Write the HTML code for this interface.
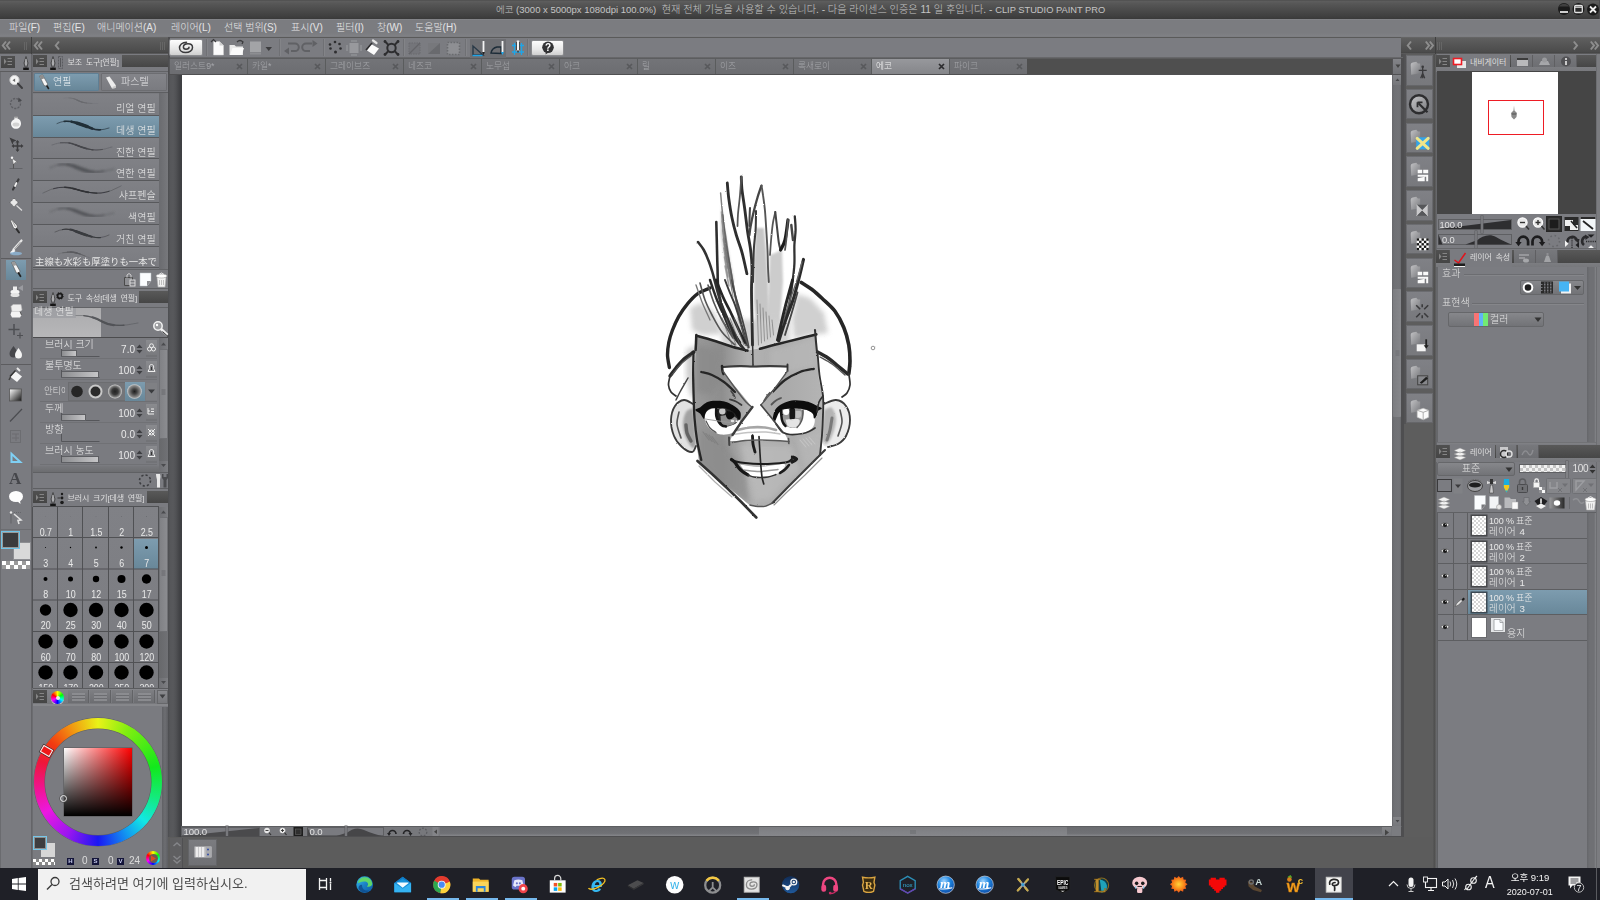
<!DOCTYPE html>
<html lang="ko">
<head>
<meta charset="utf-8">
<title>CLIP STUDIO PAINT PRO</title>
<style>
*{box-sizing:border-box;margin:0;padding:0}
html,body{width:1600px;height:900px;overflow:hidden;background:#7a7b80}
body{position:relative;font-family:"Liberation Sans","Noto Sans CJK KR",sans-serif;font-size:10px;color:#e6e6e6;line-height:1}
.a,.a *{position:absolute}
.a{left:0;top:0}
.t{white-space:nowrap;color:#e4e4e6;font-size:10px;line-height:12px;font-weight:300}
.hd{background:linear-gradient(#484848,#5b5b5b)}
.g{background:#7a7b80}
.sel{background:linear-gradient(#7498b0,#5e8199)}
.btn{background:linear-gradient(#8b8c90,#77787c);border:1px solid #6a6b6f}
svg{position:absolute;overflow:visible}
</style>
</head>
<body>
<div class="a" id="root" style="width:1600px;height:900px;filter:blur(.4px)">
<!-- title bar -->
<div style="left:0;top:0;width:1600px;height:19px;background:linear-gradient(#484848 0,#5e5e5e 1px,#565656 4px,#3e3e3e 17px,#3a3a3a 18.500px,#6a6a6c 19px)"></div>
<svg style="left:1556px;top:2px" width="44" height="15" viewBox="0 0 44 15"><circle cx="8" cy="7" r="6" fill="#1b1b1b"/><path d="M3 4.500a6 6 0 0 1 10 0z" fill="#4a4a4a" opacity=".8"/><rect x="4" y="9" width="8" height="2" fill="#cfcfcf"/><circle cx="22.500" cy="7" r="6" fill="#1b1b1b"/><rect x="18.700" y="3.500" width="7.600" height="7" rx="1" fill="#2a2a2a" stroke="#e2e2e2" stroke-width="1.300"/><path d="M19 5.200h7" stroke="#e2e2e2" stroke-width="1.200"/><circle cx="37" cy="7.500" r="6" fill="#1b1b1b"/><path d="M34 4.500l6 6M40 4.500l-6 6" stroke="#ececec" stroke-width="1.800"/></svg>
<div style="left:1599px;top:0;width:1px;height:37px;background:#4a4a4c"></div>
<div class="t" style="left:496px;top:4px;width:620px;color:#c4c4c4;font-size:10.170px"><span style="position:static;font-size:9.500px">에코 (3000 x 5000px 1080dpi 100.0%)</span>&nbsp; 현재 전체 기능을 사용할 수 있습니다. - 다음 라이센스 인증은 11 일 후입니다. - <span style="position:static;font-size:9.300px">CLIP STUDIO PAINT PRO</span></div>
<!-- menu bar -->
<div style="left:0;top:19px;width:1600px;height:18px;background:linear-gradient(#8a8b8f 0,#7b7c80 1px,#7b7c80 14px,#808185 17px,#7a7b7f 18px)"></div>
<div class="t" style="left:9px;top:22px">파일(F)</div>
<div class="t" style="left:53px;top:22px">편집(E)</div>
<div class="t" style="left:97px;top:22px">애니메이션(A)</div>
<div class="t" style="left:171px;top:22px">레이어(L)</div>
<div class="t" style="left:224px;top:22px">선택 범위(S)</div>
<div class="t" style="left:291px;top:22px">표시(V)</div>
<div class="t" style="left:336px;top:22px">필터(I)</div>
<div class="t" style="left:377px;top:22px">창(W)</div>
<div class="t" style="left:415px;top:22px">도움말(H)</div>
<!-- command bar -->
<div style="left:168px;top:37px;width:1235px;height:21px;background:#7b7c81;border-top:1px solid #5a5a5a"></div>
<!-- document tab row -->
<div style="left:168px;top:58px;width:1235px;height:16px;background:#4f4f4f"></div>
<!-- canvas -->
<div style="left:181px;top:74px;width:1211px;height:752px;background:#fff"></div>
<!-- left splitter strip -->
<div style="left:168px;top:74px;width:13.500px;height:794px;background:linear-gradient(90deg,#4c4d50 0,#56575a 2px,#58595c 5px,#515255 8px,#48494c 10px,#404144 12px,#3e3f42 13.500px)"></div>
<!-- right vertical scrollbar + strip -->
<div style="left:1392px;top:74px;width:9px;height:752px;background:#77787c"></div>
<div style="left:1401px;top:37px;width:35px;height:831px;background:#5d5d5d"></div>
<!-- bottom status + dark area -->
<div style="left:181px;top:826px;width:1220px;height:10.500px;background:#7b7c81"></div>
<div style="left:168px;top:836.500px;width:1268px;height:31.500px;background:#5c5c5c"></div>
<!-- right panel -->
<div style="left:1436px;top:37px;width:164px;height:831px;background:#7b7c81"></div>
<!-- taskbar -->
<div style="left:0;top:868px;width:1600px;height:32px;background:#1f2027"></div>
<!-- left tool column -->
<div style="left:0;top:37px;width:168px;height:17px;background:linear-gradient(#6b6b6b 0,#5f5f5f 1px,#4b4b4b 15px,#444 16px,#6d6d6f 17px)"></div>
<div style="left:31px;top:37px;width:1px;height:17px;background:#3f3f3f"></div>
<svg style="left:2px;top:41px" width="5" height="9"><path d="M4 0.5 L0.8 4.5 L4 8.5" fill="none" stroke="#8e8e8e" stroke-width="2"/></svg>
<svg style="left:6px;top:41px" width="5" height="9"><path d="M4 0.5 L0.8 4.5 L4 8.5" fill="none" stroke="#8e8e8e" stroke-width="2"/></svg>
<svg style="left:34px;top:41px" width="5" height="9"><path d="M4 0.5 L0.8 4.5 L4 8.5" fill="none" stroke="#8e8e8e" stroke-width="2"/></svg>
<svg style="left:38px;top:41px" width="5" height="9"><path d="M4 0.5 L0.8 4.5 L4 8.5" fill="none" stroke="#8e8e8e" stroke-width="2"/></svg>
<svg style="left:55px;top:41px" width="5" height="9"><path d="M4 0.5 L0.8 4.5 L4 8.5" fill="none" stroke="#8e8e8e" stroke-width="2"/></svg>
<div style="left:24px;top:42px;width:1px;height:8px;background:#666"></div><div style="left:26px;top:42px;width:1px;height:8px;background:#666"></div>
<div style="left:160px;top:42px;width:1px;height:8px;background:#666"></div><div style="left:162px;top:42px;width:1px;height:8px;background:#666"></div><div style="left:164px;top:42px;width:1px;height:8px;background:#666"></div>
<div style="left:0;top:54px;width:31px;height:18px;background:#7a7b80"></div>
<div style="left:1px;top:55.500px;width:14px;height:12.500px;background:linear-gradient(#505050,#454545)"></div>
<svg style="left:3px;top:57px" width="10" height="9"><path d="M1 1.5L3.5 4.5L1 7.5Z" fill="#858585"/><path d="M4.5 1.5H9M4.5 4.5H9M4.5 7.5H9" stroke="#858585" stroke-width="1"/></svg>
<svg style="left:22px;top:56px" width="8" height="15"><path d="M4 0.5L2 7L3 11H5L6 7Z" fill="#8d8e92" stroke="#3a3a3a" stroke-width="0.8"/><path d="M4 3V9" stroke="#d8d8d8" stroke-width="0.8"/><rect x="1.2" y="11.6" width="5.6" height="2.4" fill="#151515"/></svg>
<div style="left:31px;top:54px;width:2px;height:814px;background:linear-gradient(90deg,#606064,#6f7074)"></div>
<div style="left:0;top:71px;width:31px;height:1px;background:#5c5c5e"></div>
<div style="left:0;top:72px;width:1px;height:796px;background:#6a6b6f"></div>
<div style="left:1px;top:258px;width:30px;height:1px;background:#5c5c5f"></div>
<div style="left:1px;top:364px;width:30px;height:1px;background:#5c5c5f"></div>
<div style="left:1px;top:529px;width:30px;height:1px;background:#6c6d71"></div>
<div style="left:6px;top:260px;width:20px;height:20px;background:linear-gradient(#7d9caf,#688799)"></div>
<svg style="left:8px;top:74px" width="16" height="17" viewBox="0 0 16 17"><circle cx="6.5" cy="6" r="4.6" fill="#f4f4f4" stroke="#d0d0d0"/><path d="M4.5 6.3l2.6-1.7v3.4z" fill="#666"/><path d="M10 9.6l4 4.4" stroke="#3c3c3e" stroke-width="2" stroke-linecap="round"/></svg>
<svg style="left:8px;top:95px" width="16" height="17" viewBox="0 0 16 17"><circle cx="7.5" cy="8.5" r="5" fill="none" stroke="#5d5e62" stroke-width="1.3" stroke-dasharray="2.2 1.2"/><path d="M10.5 2.5l3.5 3-4 1.5z" fill="#48494c"/></svg>
<svg style="left:8px;top:116px" width="16" height="17" viewBox="0 0 16 17"><path d="M8 2.2c3 0 5 2.3 5 5.3s-2 5.3-5 5.3-5-2.3-5-5.3c0-2 1.6-3.3 3.4-4.3V1.2h3.2v2" fill="#f4f4f4"/><ellipse cx="8" cy="8.6" rx="3.4" ry="2" fill="#d2d2d2"/><rect x="6.3" y="0.6" width="3.4" height="1.6" fill="#a6a6a6"/></svg>
<svg style="left:8px;top:136px" width="16" height="17" viewBox="0 0 16 17"><path d="M1.5 1.5l7 3-3 1.2-1 3z" fill="#3c3c3e"/><path d="M9.5 5.5v9M5 10h9" stroke="#3c3c3e" stroke-width="1.6"/><path d="M9.5 4l-2 2.5h4zM9.5 16l-2-2.500h4zM3.500 10l2.500-2v4zM15.500 10l-2.500-2v4z" fill="#3c3c3e"/></svg>
<svg style="left:8px;top:156px" width="16" height="17" viewBox="0 0 16 17"><path d="M4.200 2.200l1.200 6.500 1.500-2 2.400-.5z" fill="#f4f4f4" stroke="#666" stroke-width=".6"/><circle cx="4" cy="1.8" r="1.200" fill="#f4f4f4"/><path d="M1.500 12.500h13" stroke="#636468" stroke-width="1"/><path d="M5.500 8v4.500" stroke="#555" stroke-width="1"/></svg>
<svg style="left:8px;top:177px" width="16" height="17" viewBox="0 0 16 17"><path d="M10.500 2.500l-5.500 10" stroke="#3c3c3e" stroke-width="2.200" stroke-linecap="round"/><path d="M8.500 6l-1.500 3" stroke="#f4f4f4" stroke-width="1.800" stroke-linecap="round"/></svg>
<svg style="left:8px;top:197px" width="16" height="17" viewBox="0 0 16 17"><path d="M6 1l4 4.500-4 4.500-4-4.500z" fill="#e9e9e9" stroke="#5c5c5c" stroke-width=".8" stroke-dasharray="1.500 1"/><path d="M8.500 8.500l5.500 5" stroke="#dcdcdc" stroke-width="1.200"/></svg>
<svg style="left:8px;top:218px" width="16" height="17" viewBox="0 0 16 17"><path d="M4 1.500l5.500 6.500-1 3.500-3-1.500-3-7z" fill="#f4f4f4" stroke="#555" stroke-width=".7"/><path d="M8.500 11l2.500 3.500" stroke="#2d2d2d" stroke-width="2" stroke-linecap="round"/><path d="M4 2l3.500 7" stroke="#777" stroke-width=".7"/></svg>
<svg style="left:8px;top:239px" width="16" height="17" viewBox="0 0 16 17"><path d="M13.500 1.500l-8 9" stroke="#e6e6e6" stroke-width="2.200" stroke-linecap="round"/><path d="M5.500 10l-3.500 3.500 2.500 1 3-2.500z" fill="#f4f4f4"/><ellipse cx="8" cy="14.500" rx="6" ry="1.800" fill="#8fb8d8" opacity=".8"/><path d="M12.500 3l-6 7" stroke="#8a8a8a" stroke-width=".8"/></svg>
<svg style="left:8px;top:261px" width="16" height="17" viewBox="0 0 16 17"><path d="M3.500 1.500l3-1 5.500 9.500-.8 2.500-2.800-.5z" fill="#f4f4f4" stroke="#565656" stroke-width=".7"/><path d="M3.500 1.500l3-1 2 3.500-3.200 1z" fill="#9a9a9a"/><path d="M10.500 12l2 3.200" stroke="#222" stroke-width="1.800" stroke-linecap="round"/></svg>
<svg style="left:8px;top:282px" width="16" height="17" viewBox="0 0 16 17"><ellipse cx="7" cy="10" rx="4.500" ry="2.300" fill="#f4f4f4"/><ellipse cx="7" cy="13" rx="4.500" ry="2" fill="#e3e3e3"/><rect x="5" y="4.500" width="4" height="4" fill="#ededed"/><path d="M10 6l5-3v6z" fill="#a3a4a8" opacity=".8"/></svg>
<svg style="left:8px;top:303px" width="16" height="17" viewBox="0 0 16 17"><path d="M5 1.500h8l1 5.500-2 1.500h-8l-1-5z" fill="#ededed" stroke="#bdbdbd" stroke-width=".6"/><path d="M3.500 8.500h8.500l1.500 3.500-1.500 2.500h-8l-1.500-3z" fill="#f4f4f4"/><path d="M12 8.500l1.500 3.500" stroke="#555" stroke-width="1"/></svg>
<svg style="left:8px;top:323px" width="16" height="17" viewBox="0 0 16 17"><path d="M6 1v11M.5 6.500h11" stroke="#4e4f53" stroke-width="1.500"/><path d="M12 9.500v6M9 12.500h6" stroke="#4e4f53" stroke-width="1.200"/></svg>
<svg style="left:8px;top:344px" width="16" height="17" viewBox="0 0 16 17"><path d="M5.500 2c2 3 4 5 4 7.500a4 4 0 0 1-8 0c0-2.500 2-4.500 4-7.500z" fill="#46474b"/><path d="M10.500 4c2 3 3.500 4.500 3.500 7a3.500 3.500 0 0 1-7 0c0-2.500 1.500-4 3.500-7z" fill="#f4f4f4"/></svg>
<svg style="left:8px;top:367px" width="16" height="17" viewBox="0 0 16 17"><path d="M7 4l7 5.500-5 5.500-6.500-5z" fill="#f4f4f4"/><path d="M2 9.500l5.500-6" stroke="#333" stroke-width="1.600"/><path d="M9 1l3 3" stroke="#e8e8e8" stroke-width="2"/><path d="M2.500 10l-1.500 3" stroke="#444" stroke-width="1.500"/></svg>
<svg style="left:8px;top:387px" width="16" height="17" viewBox="0 0 16 17"><defs><linearGradient id="tg" x1="0" y1="0" x2="1" y2="1"><stop offset="0" stop-color="#fff"/><stop offset="1" stop-color="#111"/></linearGradient></defs><rect x="1.500" y="2" width="12" height="12" fill="url(#tg)" stroke="#555" stroke-width=".8"/></svg>
<svg style="left:8px;top:407px" width="16" height="17" viewBox="0 0 16 17"><path d="M2 14.500L14 2" stroke="#4b4c50" stroke-width="1.200"/></svg>
<svg style="left:8px;top:428px" width="16" height="17" viewBox="0 0 16 17"><rect x="2.500" y="2.500" width="10" height="12" fill="none" stroke="#6c6d71" stroke-width="1"/><path d="M4 6h7M4 10h7M8 6v7" stroke="#6c6d71" stroke-width="1"/></svg>
<svg style="left:8px;top:449px" width="16" height="17" viewBox="0 0 16 17"><path d="M3.500 4.800v8.200h8.800z" fill="none" stroke="#7fd0f4" stroke-width="2" stroke-linejoin="miter"/></svg>
<svg style="left:8px;top:470px" width="16" height="17" viewBox="0 0 16 17"><text x="1" y="14" font-family="Liberation Serif,serif" font-weight="bold" font-size="17" fill="#45464a">A</text></svg>
<svg style="left:8px;top:489px" width="16" height="17" viewBox="0 0 16 17"><ellipse cx="8" cy="7.500" rx="7" ry="5.500" fill="#fdfdfd"/><path d="M9 12l3.500 3-.5-4z" fill="#fdfdfd"/></svg>
<svg style="left:8px;top:510px" width="16" height="17" viewBox="0 0 16 17"><path d="M3 2.500v11" stroke="#6b6c70" stroke-width="1.600"/><circle cx="3" cy="2.500" r="1.200" fill="#e6e6e6"/><path d="M6 4l7 6-3 .5 1 3.500" fill="none" stroke="#e2e2e2" stroke-width="1.600"/><path d="M6 2.500h7" stroke="#66676b" stroke-width="1" stroke-dasharray="1 1"/></svg>
<div style="left:13px;top:542px;width:18px;height:18px;background:#d9d9d9;border:1px solid #8d8e92"></div>
<div style="left:1px;top:531px;width:19px;height:18px;background:#3b3b3d;border:1px solid #6fc3e6;box-shadow:inset 0 0 0 1px #9a9a9a"></div>
<div style="left:2px;top:561px;width:28px;height:8px;background:#fff;background-image:linear-gradient(45deg,#9a9a9a 25%,transparent 25%,transparent 75%,#9a9a9a 75%),linear-gradient(45deg,#9a9a9a 25%,transparent 25%,transparent 75%,#9a9a9a 75%);background-size:8px 8px;background-position:0 0,4px 4px"></div>
<!-- left sub tool / property / size / colour panels -->
<div style="left:33px;top:54.7px;width:135px;height:12.500px;background:linear-gradient(#595959,#464646)"></div>
<div style="left:33px;top:54.7px;width:14px;height:12.500px;background:linear-gradient(#505050,#454545)"></div>
<svg style="left:35px;top:56.7px" width="10" height="9"><path d="M1 1.500L3.500 4.500L1 7.500Z" fill="#858585"/><path d="M4.500 1.500H9M4.500 4.500H9M4.500 7.500H9" stroke="#858585" stroke-width="1"/></svg>
<div style="left:47px;top:54.7px;width:75px;height:17px;background:#7a7b80"></div>
<svg style="left:49px;top:55.7px" width="8" height="15"><path d="M4 0.500L2 7L3 11H5L6 7Z" fill="#8d8e92" stroke="#3a3a3a" stroke-width="0.800"/><path d="M4 3V9" stroke="#d8d8d8" stroke-width="0.800"/><rect x="1.200" y="11.600" width="5.600" height="2.400" fill="#151515"/></svg>
<svg style="left:57px;top:56px" width="7" height="13"><path d="M1.500 .500h4v12h-4z" fill="none" stroke="#5b5c60" stroke-dasharray="2 1"/><path d="M3.500 2v9" stroke="#55565a"/></svg>
<div class="t" style="left:67.500px;top:56.7px;font-size:8px;font-weight:400;letter-spacing:-.1px;word-spacing:1.500px;color:#dedede">보조 도구[연필]</div>
<div style="left:33px;top:70.7px;width:135px;height:1px;background:#626366"></div>
<div style="left:34px;top:73px;width:65px;height:18px;background:linear-gradient(#7d9caf,#688799);border:1px solid #5f7f94;border-radius:1px"></div>
<div style="left:101px;top:73px;width:66px;height:18px;background:linear-gradient(#84858a,#7a7b80);border:1px solid #6c6d71;border-radius:1px"></div>
<svg style="left:38px;top:74px" width="12" height="16" viewBox="0 0 12 16"><path d="M1.500 2l3-1.300 5 9-.6 2.600-2.800-.8z" fill="#f6f6f6" stroke="#555" stroke-width=".6"/><path d="M1.500 2l3-1.300 2 3.600-3.200 1.200z" fill="#8d8d8d"/><path d="M9 12l1.500 2.500" stroke="#222" stroke-width="1.600" stroke-linecap="round"/></svg>
<div class="t" style="left:53px;top:76px;color:#eef2f5">연필</div>
<svg style="left:105px;top:76px" width="12" height="14" viewBox="0 0 12 14"><path d="M1 1.500l3.500-1 6.500 9-.5 2.500-3.500.5z" fill="#ececec"/><path d="M7.500 11l3.500-1.500-.5 2.500-3 .5z" fill="#c9c9c9"/></svg>
<div class="t" style="left:121px;top:76px">파스텔</div>
<div style="left:33px;top:92px;width:135px;height:1px;background:#5d5e61"></div>
<svg width="0" height="0"><defs><filter id="b1"><feGaussianBlur stdDeviation="0.700"/></filter><filter id="b2"><feGaussianBlur stdDeviation="1.300"/></filter></defs></svg>
<div style="left:33px;top:94.0px;width:126px;height:20.8px;background:linear-gradient(#808186,#7a7b80)"></div>
<div style="left:33px;top:114.8px;width:126px;height:1px;background:#58595c"></div>
<svg style="left:0;top:0" width="168" height="300"><g fill="none" stroke="#5f6064" stroke-linecap="round" filter="url(#b1)" opacity="0.7"><path d="M64 98 q8 -1 14 2.500 t20 3" stroke-width="0.28" opacity=".7"/><path d="M64 98 q8 -1 14 2.500 t20 3" pathLength="100" stroke-dasharray="70 200" stroke-dashoffset="-14" stroke-width="0.48"/><path d="M64 98 q8 -1 14 2.500 t20 3" pathLength="100" stroke-dasharray="40 200" stroke-dashoffset="-28" stroke-width="0.80"/><path d="M64 98 q8 -1 14 2.500 t20 3" pathLength="100" stroke-dasharray="20 200" stroke-dashoffset="-38" stroke-width="1.04"/></g></svg>
<div class="t" style="left:33px;top:103.0px;width:122.600px;text-align:right;color:#ececec">리얼 연필</div>
<div style="left:33px;top:115.8px;width:126px;height:20.8px;background:linear-gradient(#7d9caf,#688799)"></div>
<div style="left:33px;top:136.6px;width:126px;height:1px;background:#58595c"></div>
<svg style="left:0;top:0" width="168" height="300"><g fill="none" stroke="#1f2a33" stroke-linecap="round" filter="url(#b1)" opacity="0.95"><path d="M57 123.500 q8 -4 18 -1 t17 6 t17 -.5" stroke-width="0.91" opacity=".7"/><path d="M57 123.500 q8 -4 18 -1 t17 6 t17 -.5" pathLength="100" stroke-dasharray="70 200" stroke-dashoffset="-14" stroke-width="1.56"/><path d="M57 123.500 q8 -4 18 -1 t17 6 t17 -.5" pathLength="100" stroke-dasharray="40 200" stroke-dashoffset="-28" stroke-width="2.60"/><path d="M57 123.500 q8 -4 18 -1 t17 6 t17 -.5" pathLength="100" stroke-dasharray="20 200" stroke-dashoffset="-38" stroke-width="3.38"/></g></svg>
<div class="t" style="left:33px;top:124.8px;width:122.600px;text-align:right;color:#ececec">데생 연필</div>
<div style="left:33px;top:137.6px;width:126px;height:20.8px;background:linear-gradient(#808186,#7a7b80)"></div>
<div style="left:33px;top:158.4px;width:126px;height:1px;background:#58595c"></div>
<svg style="left:0;top:0" width="168" height="300"><g fill="none" stroke="#404145" stroke-linecap="round" filter="url(#b1)" opacity="0.9"><path d="M52 145 q12 -5 24 0 t20 5 t16 -3" stroke-width="0.45" opacity=".7"/><path d="M52 145 q12 -5 24 0 t20 5 t16 -3" pathLength="100" stroke-dasharray="70 200" stroke-dashoffset="-14" stroke-width="0.78"/><path d="M52 145 q12 -5 24 0 t20 5 t16 -3" pathLength="100" stroke-dasharray="40 200" stroke-dashoffset="-28" stroke-width="1.30"/><path d="M52 145 q12 -5 24 0 t20 5 t16 -3" pathLength="100" stroke-dasharray="20 200" stroke-dashoffset="-38" stroke-width="1.69"/></g></svg>
<div class="t" style="left:33px;top:146.6px;width:122.600px;text-align:right;color:#ececec">진한 연필</div>
<div style="left:33px;top:159.4px;width:126px;height:20.8px;background:linear-gradient(#808186,#7a7b80)"></div>
<div style="left:33px;top:180.20000000000002px;width:126px;height:1px;background:#58595c"></div>
<svg style="left:0;top:0" width="168" height="300"><g fill="none" stroke="#4a4b4f" stroke-linecap="round" filter="url(#b2)" opacity="0.8"><path d="M50 168 q12 -7 26 -1 t22 5 t16 -3" stroke-width="1.05" opacity=".7"/><path d="M50 168 q12 -7 26 -1 t22 5 t16 -3" pathLength="100" stroke-dasharray="70 200" stroke-dashoffset="-14" stroke-width="1.80"/><path d="M50 168 q12 -7 26 -1 t22 5 t16 -3" pathLength="100" stroke-dasharray="40 200" stroke-dashoffset="-28" stroke-width="3.00"/><path d="M50 168 q12 -7 26 -1 t22 5 t16 -3" pathLength="100" stroke-dasharray="20 200" stroke-dashoffset="-38" stroke-width="3.90"/></g></svg>
<div class="t" style="left:33px;top:168.4px;width:122.600px;text-align:right;color:#ececec">연한 연필</div>
<div style="left:33px;top:181.2px;width:126px;height:20.8px;background:linear-gradient(#808186,#7a7b80)"></div>
<div style="left:33px;top:202.0px;width:126px;height:1px;background:#58595c"></div>
<svg style="left:0;top:0" width="168" height="300"><g fill="none" stroke="#2e2f33" stroke-linecap="round" filter="url(#b1)" opacity="0.95"><path d="M43 193 q16 -9 32 -4 t26 4 t20 -7" stroke-width="0.45" opacity=".7"/><path d="M43 193 q16 -9 32 -4 t26 4 t20 -7" pathLength="100" stroke-dasharray="70 200" stroke-dashoffset="-14" stroke-width="0.78"/><path d="M43 193 q16 -9 32 -4 t26 4 t20 -7" pathLength="100" stroke-dasharray="40 200" stroke-dashoffset="-28" stroke-width="1.30"/><path d="M43 193 q16 -9 32 -4 t26 4 t20 -7" pathLength="100" stroke-dasharray="20 200" stroke-dashoffset="-38" stroke-width="1.69"/></g></svg>
<div class="t" style="left:33px;top:190.2px;width:122.600px;text-align:right;color:#ececec">샤프펜슬</div>
<div style="left:33px;top:203.0px;width:126px;height:20.8px;background:linear-gradient(#808186,#7a7b80)"></div>
<div style="left:33px;top:223.8px;width:126px;height:1px;background:#58595c"></div>
<svg style="left:0;top:0" width="168" height="300"><g fill="none" stroke="#4a4b4f" stroke-linecap="round" filter="url(#b2)" opacity="0.8"><path d="M50 212 q12 -7 26 -1 t22 5 t16 -3" stroke-width="0.91" opacity=".7"/><path d="M50 212 q12 -7 26 -1 t22 5 t16 -3" pathLength="100" stroke-dasharray="70 200" stroke-dashoffset="-14" stroke-width="1.56"/><path d="M50 212 q12 -7 26 -1 t22 5 t16 -3" pathLength="100" stroke-dasharray="40 200" stroke-dashoffset="-28" stroke-width="2.60"/><path d="M50 212 q12 -7 26 -1 t22 5 t16 -3" pathLength="100" stroke-dasharray="20 200" stroke-dashoffset="-38" stroke-width="3.38"/></g></svg>
<div class="t" style="left:33px;top:212.0px;width:122.600px;text-align:right;color:#ececec">색연필</div>
<div style="left:33px;top:224.8px;width:126px;height:20.8px;background:linear-gradient(#808186,#7a7b80)"></div>
<div style="left:33px;top:245.60000000000002px;width:126px;height:1px;background:#58595c"></div>
<svg style="left:0;top:0" width="168" height="300"><g fill="none" stroke="#333438" stroke-linecap="round" filter="url(#b1)" opacity="0.9"><path d="M55 232 q10 -5 20 -1 t18 6 t16 -2" stroke-width="0.70" opacity=".7"/><path d="M55 232 q10 -5 20 -1 t18 6 t16 -2" pathLength="100" stroke-dasharray="70 200" stroke-dashoffset="-14" stroke-width="1.20"/><path d="M55 232 q10 -5 20 -1 t18 6 t16 -2" pathLength="100" stroke-dasharray="40 200" stroke-dashoffset="-28" stroke-width="2.00"/><path d="M55 232 q10 -5 20 -1 t18 6 t16 -2" pathLength="100" stroke-dasharray="20 200" stroke-dashoffset="-38" stroke-width="2.60"/></g></svg>
<div class="t" style="left:33px;top:233.8px;width:122.600px;text-align:right;color:#ececec">거친 연필</div>
<div style="left:33px;top:246.6px;width:126px;height:20.8px;background:linear-gradient(#808186,#7a7b80)"></div>
<div style="left:33px;top:267.4px;width:126px;height:1px;background:#58595c"></div>
<svg style="left:0;top:0" width="168" height="300"><g fill="none" stroke="#525357" stroke-linecap="round" filter="url(#b1)" opacity="0.8"><path d="M58 254 q12 -4 22 0 t10 4" stroke-width="0.42" opacity=".7"/><path d="M58 254 q12 -4 22 0 t10 4" pathLength="100" stroke-dasharray="70 200" stroke-dashoffset="-14" stroke-width="0.72"/><path d="M58 254 q12 -4 22 0 t10 4" pathLength="100" stroke-dasharray="40 200" stroke-dashoffset="-28" stroke-width="1.20"/><path d="M58 254 q12 -4 22 0 t10 4" pathLength="100" stroke-dasharray="20 200" stroke-dashoffset="-38" stroke-width="1.56"/></g></svg>
<div class="t" style="left:35px;top:256px;font-family:'Liberation Sans','Noto Sans CJK JP',sans-serif;font-size:9.400px;font-weight:400;letter-spacing:0;color:#e6e6e6;width:123px;overflow:hidden">主線も水彩も厚塗りも一本で</div>
<div style="left:159px;top:93px;width:9px;height:176px;background:linear-gradient(90deg,#6a6b6f,#77787c)"></div>
<div style="left:33px;top:269px;width:135px;height:1px;background:#636467"></div>
<svg style="left:122px;top:271px" width="46" height="18" viewBox="0 0 46 18"><path d="M2.500 6.500h8v8h-8z" fill="#8e8f93" stroke="#4a4a4a"/><path d="M5 6.500v-2.500l2-1.500 2 1.500v2.500" fill="none" stroke="#d0d0d0"/><rect x="8" y="9" width="5" height="6" fill="#7a7b80" stroke="#e4e4e4" stroke-width=".9"/><path d="M8 12h5" stroke="#e4e4e4" stroke-width=".8"/><path d="M18 2h11v8l-4 5h-7z" fill="#fbfdff" stroke="#bfc4c8" stroke-width=".5"/><path d="M29 10l-4 5v-5z" fill="#8d8e92"/><path d="M35 6.500h9l-1 9.500h-7z" fill="#f0f0f0" stroke="#b0b0b0" stroke-width=".6"/><ellipse cx="39.500" cy="5" rx="5.500" ry="2" fill="#fff" stroke="#9c9c9c" stroke-width=".6"/><path d="M37 3.500q2.500-3 5 0" fill="none" stroke="#e8e8e8"/><path d="M37.500 9v5M39.500 9v5M41.500 9v5" stroke="#a8a8a8" stroke-width=".7"/></svg>
<div style="left:33px;top:288px;width:135px;height:1px;background:#5e5f62"></div>
<div style="left:33px;top:290.7px;width:135px;height:12.500px;background:linear-gradient(#595959,#464646)"></div>
<div style="left:33px;top:290.7px;width:14px;height:12.500px;background:linear-gradient(#505050,#454545)"></div>
<svg style="left:35px;top:292.7px" width="10" height="9"><path d="M1 1.500L3.500 4.500L1 7.500Z" fill="#858585"/><path d="M4.500 1.500H9M4.500 4.500H9M4.500 7.500H9" stroke="#858585" stroke-width="1"/></svg>
<div style="left:47px;top:290.7px;width:92px;height:17px;background:#7a7b80"></div>
<svg style="left:49px;top:291.7px" width="8" height="15"><path d="M4 0.500L2 7L3 11H5L6 7Z" fill="#8d8e92" stroke="#3a3a3a" stroke-width="0.800"/><path d="M4 3V9" stroke="#d8d8d8" stroke-width="0.800"/><rect x="1.200" y="11.600" width="5.600" height="2.400" fill="#151515"/></svg>
<svg style="left:56.300px;top:291.700px" width="7.800" height="7.800" viewBox="0 0 10 10"><circle cx="5" cy="5" r="3" fill="none" stroke="#1c1c1c" stroke-width="2.200"/><circle cx="5" cy="5" r="4" fill="none" stroke="#1c1c1c" stroke-width="1.600" stroke-dasharray="1.500 1.640"/></svg>
<div class="t" style="left:67.500px;top:292.7px;font-size:8px;font-weight:400;letter-spacing:-.1px;word-spacing:1.500px;color:#dedede">도구 속성[데생 연필]</div>
<div style="left:33px;top:306.7px;width:135px;height:1px;background:#626366"></div>
<div style="left:33px;top:307.500px;width:135px;height:29.500px;background:#7b7c81"></div>
<div style="left:33px;top:307.500px;width:68px;height:29.500px;background:linear-gradient(#ababad,#b7b7b9)"></div>
<div style="left:33px;top:307.500px;width:43px;height:10.500px;background:rgba(150,152,156,.55)"></div>
<svg style="left:0;top:0" width="168" height="340"><g fill="none" stroke="#4e4f53" stroke-linecap="round" filter="url(#b1)" opacity=".9"><path d="M76 315.500 q14 -1 26 6 t36 1.500" stroke-width=".7" opacity=".7"/><path d="M76 315.500 q14 -1 26 6 t36 1.500" pathLength="100" stroke-dasharray="66 200" stroke-dashoffset="-12" stroke-width="1.300"/><path d="M76 315.500 q14 -1 26 6 t36 1.500" pathLength="100" stroke-dasharray="36 200" stroke-dashoffset="-26" stroke-width="2.200"/></g></svg>
<div class="t" style="left:34px;top:306px;color:#e9e9e9;font-size:10px">데생 연필</div>
<svg style="left:152px;top:320px" width="17" height="17" viewBox="0 0 17 17"><circle cx="6" cy="6" r="4.200" fill="#9b9c9f" stroke="#f2f2f2" stroke-width="1.500"/><path d="M9 9l6.500 6" stroke="#f0f0f0" stroke-width="2.600"/><path d="M10.500 11.500l5.500 5" stroke="#333" stroke-width="1"/><circle cx="5" cy="5" r="1.200" fill="#fff"/></svg>
<div style="left:33px;top:337px;width:135px;height:1px;background:#4c4c4e"></div>
<div style="left:40px;top:358px;width:117px;height:1px;background:#707175"></div>
<div class="t" style="left:45px;top:339px;color:#e9e9e9">브러시 크기</div>
<div class="t" style="left:100px;top:344px;width:35px;text-align:right;color:#e9e9e9;font-size:10px">7.0</div>
<svg style="left:136px;top:344px" width="7" height="10"><path d="M3.500 .500l3 3.500h-6zM3.500 9.500l3-3.500h-6z" fill="#3e3f42"/></svg>
<div style="left:146px;top:340px;width:11px;height:17px;background:linear-gradient(#8a8b8f,#797a7e);border-bottom:2px solid #727377"></div>
<svg style="left:147px;top:343px" width="9" height="9" viewBox="0 0 9 9"><circle cx="4.500" cy="2.800" r="2" fill="none" stroke="#eee"/><circle cx="2.500" cy="6" r="2" fill="none" stroke="#eee"/><circle cx="6.500" cy="6" r="2" fill="none" stroke="#eee"/></svg>
<svg style="left:61px;top:349px" width="40" height="9"><path d="M.500 0V7.500H38.500" fill="none" stroke="#55565a"/></svg>
<div style="left:62px;top:349.5px;width:15px;height:7.500px;background:linear-gradient(90deg,#8c8d90,#c6c6c8);border:1px solid #5e5f63;border-left:none"></div>
<div style="left:40px;top:379px;width:117px;height:1px;background:#707175"></div>
<div class="t" style="left:45px;top:360px;color:#e9e9e9">불투명도</div>
<div class="t" style="left:100px;top:365px;width:35px;text-align:right;color:#e9e9e9;font-size:10px">100</div>
<svg style="left:136px;top:365px" width="7" height="10"><path d="M3.500 .500l3 3.500h-6zM3.500 9.500l3-3.500h-6z" fill="#3e3f42"/></svg>
<div style="left:146px;top:361px;width:11px;height:17px;background:linear-gradient(#8a8b8f,#797a7e);border-bottom:2px solid #727377"></div>
<svg style="left:147px;top:364px" width="9" height="9" viewBox="0 0 9 9"><path d="M4.500 .500c2 0 2.500 2 2 4l1.500 3h-7l1.500-3c-.5-2 0-4 2-4z" fill="none" stroke="#eee"/><path d="M4.500 3v3" stroke="#333"/></svg>
<svg style="left:61px;top:370px" width="40" height="9"><path d="M.500 0V7.500H38.500" fill="none" stroke="#55565a"/></svg>
<div style="left:62px;top:370.5px;width:37px;height:7.500px;background:linear-gradient(90deg,#8c8d90,#c6c6c8);border:1px solid #5e5f63;border-left:none"></div>
<div style="left:40px;top:422px;width:117px;height:1px;background:#707175"></div>
<div class="t" style="left:45px;top:403px;color:#e9e9e9">두께</div>
<div class="t" style="left:100px;top:408px;width:35px;text-align:right;color:#e9e9e9;font-size:10px">100</div>
<svg style="left:136px;top:408px" width="7" height="10"><path d="M3.500 .500l3 3.500h-6zM3.500 9.500l3-3.500h-6z" fill="#3e3f42"/></svg>
<div style="left:146px;top:404px;width:11px;height:17px;background:linear-gradient(#8a8b8f,#797a7e);border-bottom:2px solid #727377"></div>
<svg style="left:147px;top:407px" width="9" height="9" viewBox="0 0 9 9"><path d="M1 1v6h6M4 2l3 0M4 4.500l3 0" fill="none" stroke="#eee"/><path d="M1 4h2" stroke="#eee"/></svg>
<svg style="left:61px;top:413px" width="40" height="9"><path d="M.500 0V7.500H38.500" fill="none" stroke="#55565a"/></svg>
<div style="left:62px;top:413.5px;width:24px;height:7.500px;background:linear-gradient(90deg,#8c8d90,#c6c6c8);border:1px solid #5e5f63;border-left:none"></div>
<div style="left:40px;top:443px;width:117px;height:1px;background:#707175"></div>
<div class="t" style="left:45px;top:424px;color:#e9e9e9">방향</div>
<div class="t" style="left:100px;top:429px;width:35px;text-align:right;color:#e9e9e9;font-size:10px">0.0</div>
<svg style="left:136px;top:429px" width="7" height="10"><path d="M3.500 .500l3 3.500h-6zM3.500 9.500l3-3.500h-6z" fill="#3e3f42"/></svg>
<div style="left:146px;top:425px;width:11px;height:17px;background:linear-gradient(#8a8b8f,#797a7e);border-bottom:2px solid #727377"></div>
<svg style="left:147px;top:428px" width="9" height="9" viewBox="0 0 9 9"><path d="M1 1l7 7M8 1l-7 7" stroke="#eee"/><circle cx="4.500" cy="4.500" r="2.500" fill="none" stroke="#eee"/></svg>
<svg style="left:61px;top:434px" width="40" height="9"><path d="M.500 0V7.500H38.500" fill="none" stroke="#55565a"/></svg>
<div style="left:40px;top:464px;width:117px;height:1px;background:#707175"></div>
<div class="t" style="left:45px;top:445px;color:#e9e9e9">브러시 농도</div>
<div class="t" style="left:100px;top:450px;width:35px;text-align:right;color:#e9e9e9;font-size:10px">100</div>
<svg style="left:136px;top:450px" width="7" height="10"><path d="M3.500 .500l3 3.500h-6zM3.500 9.500l3-3.500h-6z" fill="#3e3f42"/></svg>
<div style="left:146px;top:446px;width:11px;height:17px;background:linear-gradient(#8a8b8f,#797a7e);border-bottom:2px solid #727377"></div>
<svg style="left:147px;top:449px" width="9" height="9" viewBox="0 0 9 9"><path d="M4.500 .500c2 0 2.500 2 2 4l1.500 3h-7l1.500-3c-.5-2 0-4 2-4z" fill="none" stroke="#eee"/><path d="M4.500 3v3" stroke="#333"/></svg>
<svg style="left:61px;top:455px" width="40" height="9"><path d="M.500 0V7.500H38.500" fill="none" stroke="#55565a"/></svg>
<div style="left:62px;top:455.5px;width:37px;height:7.500px;background:linear-gradient(90deg,#8c8d90,#c6c6c8);border:1px solid #5e5f63;border-left:none"></div>
<div class="t" style="left:44px;top:385px;color:#dedede;font-size:9.500px;letter-spacing:-.3px;width:21px;overflow:hidden">안티에</div>
<div style="left:68px;top:382px;width:77px;height:19px;background:#747579;border:1px solid #6c6d70"></div>
<div style="left:125px;top:382px;width:20px;height:19px;background:linear-gradient(#7d9caf,#688799)"></div>
<svg style="left:68px;top:382px" width="90" height="19" viewBox="0 0 90 19"><circle cx="9" cy="9.500" r="5.800" fill="#262626"/><circle cx="27.500" cy="9.500" r="6" fill="#2b2b2b" stroke="#c8c8c8" stroke-width="2"/><defs><radialGradient id="aa3"><stop offset="0" stop-color="#222"/><stop offset=".45" stop-color="#3a3a3a"/><stop offset=".75" stop-color="#777"/><stop offset="1" stop-color="#cfcfcf"/></radialGradient><radialGradient id="aa4"><stop offset="0" stop-color="#1e1e1e"/><stop offset=".35" stop-color="#444"/><stop offset=".8" stop-color="#8b8b8b"/><stop offset="1" stop-color="#d4d4d4"/></radialGradient></defs><circle cx="47" cy="9.500" r="7" fill="url(#aa3)"/><circle cx="66.500" cy="9.500" r="7.300" fill="url(#aa4)"/><rect x="78" y="1" width="11" height="17" fill="#7f8084"/><path d="M80 7.500h7l-3.500 4z" fill="#3a3b3e"/></svg>
<div style="left:40px;top:401px;width:117px;height:1px;background:#6e6f73"></div>
<div style="left:33px;top:466px;width:126px;height:6px;background:linear-gradient(#77787c,#6c6d70)"></div>
<div style="left:159px;top:338px;width:9px;height:134px;background:linear-gradient(90deg,#6e6f73,#7d7e82)"></div>
<div style="left:159px;top:349px;width:9px;height:90px;background:linear-gradient(90deg,#808185,#8b8c90);border:1px solid #6f7074"></div>
<div style="left:159px;top:439px;width:9px;height:22px;background:linear-gradient(90deg,#67686b,#707175)"></div>
<svg style="left:159px;top:338px" width="9" height="134"><path d="M2 7.500h5l-2.500-3zM2 126h5l-2.500 3z" fill="#4a4b4e"/><path d="M2.500 52h4M2.500 54h4M2.500 56h4" stroke="#5f6064" stroke-width=".8"/></svg>
<div style="left:33px;top:472px;width:135px;height:1px;background:#5f6063"></div>
<svg style="left:136px;top:472px" width="33" height="17" viewBox="0 0 33 17"><circle cx="9" cy="8.500" r="5.500" fill="none" stroke="#3d3e41" stroke-width="1.600" stroke-dasharray="2.200 2.100"/><path d="M20 2c0 3 1 5 1 6v7.500h3v-7.500c0-2 1-3 0-6z" fill="#e9e9e9"/><path d="M26 2v4l1.500 2v7.500h3v-7.500l1.500-2v-4h-1.500v3h-3v-3z" fill="#4b4c4f"/></svg>
<div style="left:33px;top:488px;width:135px;height:1px;background:#5e5f62"></div>
<div style="left:33px;top:490.7px;width:135px;height:12.500px;background:linear-gradient(#595959,#464646)"></div>
<div style="left:33px;top:490.7px;width:14px;height:12.500px;background:linear-gradient(#505050,#454545)"></div>
<svg style="left:35px;top:492.7px" width="10" height="9"><path d="M1 1.500L3.500 4.500L1 7.500Z" fill="#858585"/><path d="M4.500 1.500H9M4.500 4.500H9M4.500 7.500H9" stroke="#858585" stroke-width="1"/></svg>
<div style="left:47px;top:490.7px;width:100px;height:17px;background:#7a7b80"></div>
<svg style="left:49px;top:491.7px" width="8" height="15"><path d="M4 0.500L2 7L3 11H5L6 7Z" fill="#8d8e92" stroke="#3a3a3a" stroke-width="0.800"/><path d="M4 3V9" stroke="#d8d8d8" stroke-width="0.800"/><rect x="1.200" y="11.600" width="5.600" height="2.400" fill="#151515"/></svg>
<svg style="left:57px;top:492px" width="8" height="13"><path d="M.5 6h3" stroke="#333"/><circle cx="5" cy="2" r="1.200" fill="#1b1b1b"/><circle cx="5" cy="6" r="1.400" fill="#1b1b1b"/><circle cx="5" cy="10.500" r="1.800" fill="#1b1b1b"/></svg>
<div class="t" style="left:67.500px;top:492.7px;font-size:8px;font-weight:400;letter-spacing:-.1px;word-spacing:1.500px;color:#dedede">브러시 크기[데생 연필]</div>
<div style="left:33px;top:506.7px;width:135px;height:1px;background:#626366"></div>
<div style="left:33px;top:507px;width:126px;height:181px;background:linear-gradient(#808186,#7a7b80)"></div>
<div style="left:134px;top:539px;width:24px;height:30px;background:linear-gradient(#7d9caf,#688799)"></div>
<svg style="left:0;top:0" width="168" height="690"><defs><clipPath id="gc"><rect x="33" y="507" width="126" height="180"/></clipPath></defs><g clip-path="url(#gc)"><circle cx="45.5" cy="516.5" r="0.3" fill="#5a5b5f"/><text transform="translate(45.8 535.6) scale(.87 1)" text-anchor="middle" font-size="10.200" fill="#e9e9e9" font-family="Liberation Sans,sans-serif">0.7</text><circle cx="70.5" cy="516.5" r="0.3" fill="#5a5b5f"/><text transform="translate(70.8 535.6) scale(.87 1)" text-anchor="middle" font-size="10.200" fill="#e9e9e9" font-family="Liberation Sans,sans-serif">1</text><circle cx="96.0" cy="516.5" r="0.35" fill="#5a5b5f"/><text transform="translate(96.3 535.6) scale(.87 1)" text-anchor="middle" font-size="10.200" fill="#e9e9e9" font-family="Liberation Sans,sans-serif">1.5</text><circle cx="121.5" cy="516.5" r="0.4" fill="#5a5b5f"/><text transform="translate(121.8 535.6) scale(.87 1)" text-anchor="middle" font-size="10.200" fill="#e9e9e9" font-family="Liberation Sans,sans-serif">2</text><circle cx="146.5" cy="516.5" r="0.45" fill="#5a5b5f"/><text transform="translate(146.8 535.6) scale(.87 1)" text-anchor="middle" font-size="10.200" fill="#e9e9e9" font-family="Liberation Sans,sans-serif">2.5</text><circle cx="45.5" cy="547.5" r="0.5" fill="#000"/><text transform="translate(45.8 566.6) scale(.87 1)" text-anchor="middle" font-size="10.200" fill="#e9e9e9" font-family="Liberation Sans,sans-serif">3</text><circle cx="70.5" cy="547.5" r="0.7" fill="#000"/><text transform="translate(70.8 566.6) scale(.87 1)" text-anchor="middle" font-size="10.200" fill="#e9e9e9" font-family="Liberation Sans,sans-serif">4</text><circle cx="96.0" cy="547.5" r="0.9" fill="#000"/><text transform="translate(96.3 566.6) scale(.87 1)" text-anchor="middle" font-size="10.200" fill="#e9e9e9" font-family="Liberation Sans,sans-serif">5</text><circle cx="121.5" cy="547.5" r="1.2" fill="#000"/><text transform="translate(121.8 566.6) scale(.87 1)" text-anchor="middle" font-size="10.200" fill="#e9e9e9" font-family="Liberation Sans,sans-serif">6</text><circle cx="146.5" cy="547.5" r="1.5" fill="#000"/><text transform="translate(146.8 566.6) scale(.87 1)" text-anchor="middle" font-size="10.200" fill="#e9e9e9" font-family="Liberation Sans,sans-serif">7</text><circle cx="45.5" cy="579.0" r="2" fill="#000"/><text transform="translate(45.8 598.1) scale(.87 1)" text-anchor="middle" font-size="10.200" fill="#e9e9e9" font-family="Liberation Sans,sans-serif">8</text><circle cx="70.5" cy="579.0" r="2.5" fill="#000"/><text transform="translate(70.8 598.1) scale(.87 1)" text-anchor="middle" font-size="10.200" fill="#e9e9e9" font-family="Liberation Sans,sans-serif">10</text><circle cx="96.0" cy="579.0" r="3.2" fill="#000"/><text transform="translate(96.3 598.1) scale(.87 1)" text-anchor="middle" font-size="10.200" fill="#e9e9e9" font-family="Liberation Sans,sans-serif">12</text><circle cx="121.5" cy="579.0" r="4" fill="#000"/><text transform="translate(121.8 598.1) scale(.87 1)" text-anchor="middle" font-size="10.200" fill="#e9e9e9" font-family="Liberation Sans,sans-serif">15</text><circle cx="146.5" cy="579.0" r="4.7" fill="#000"/><text transform="translate(146.8 598.1) scale(.87 1)" text-anchor="middle" font-size="10.200" fill="#e9e9e9" font-family="Liberation Sans,sans-serif">17</text><circle cx="45.5" cy="610.0" r="5.7" fill="#000"/><text transform="translate(45.8 629.1) scale(.87 1)" text-anchor="middle" font-size="10.200" fill="#e9e9e9" font-family="Liberation Sans,sans-serif">20</text><circle cx="70.5" cy="610.0" r="7.2" fill="#000"/><text transform="translate(70.8 629.1) scale(.87 1)" text-anchor="middle" font-size="10.200" fill="#e9e9e9" font-family="Liberation Sans,sans-serif">25</text><circle cx="96.0" cy="610.0" r="7.2" fill="#000"/><text transform="translate(96.3 629.1) scale(.87 1)" text-anchor="middle" font-size="10.200" fill="#e9e9e9" font-family="Liberation Sans,sans-serif">30</text><circle cx="121.5" cy="610.0" r="7.2" fill="#000"/><text transform="translate(121.8 629.1) scale(.87 1)" text-anchor="middle" font-size="10.200" fill="#e9e9e9" font-family="Liberation Sans,sans-serif">40</text><circle cx="146.5" cy="610.0" r="7.2" fill="#000"/><text transform="translate(146.8 629.1) scale(.87 1)" text-anchor="middle" font-size="10.200" fill="#e9e9e9" font-family="Liberation Sans,sans-serif">50</text><circle cx="45.5" cy="641.5" r="7.2" fill="#000"/><text transform="translate(45.8 660.6) scale(.87 1)" text-anchor="middle" font-size="10.200" fill="#e9e9e9" font-family="Liberation Sans,sans-serif">60</text><circle cx="70.5" cy="641.5" r="7.2" fill="#000"/><text transform="translate(70.8 660.6) scale(.87 1)" text-anchor="middle" font-size="10.200" fill="#e9e9e9" font-family="Liberation Sans,sans-serif">70</text><circle cx="96.0" cy="641.5" r="7.2" fill="#000"/><text transform="translate(96.3 660.6) scale(.87 1)" text-anchor="middle" font-size="10.200" fill="#e9e9e9" font-family="Liberation Sans,sans-serif">80</text><circle cx="121.5" cy="641.5" r="7.2" fill="#000"/><text transform="translate(121.8 660.6) scale(.87 1)" text-anchor="middle" font-size="10.200" fill="#e9e9e9" font-family="Liberation Sans,sans-serif">100</text><circle cx="146.5" cy="641.5" r="7.2" fill="#000"/><text transform="translate(146.8 660.6) scale(.87 1)" text-anchor="middle" font-size="10.200" fill="#e9e9e9" font-family="Liberation Sans,sans-serif">120</text><circle cx="45.5" cy="672.5" r="7.2" fill="#000"/><text transform="translate(45.8 691.6) scale(.87 1)" text-anchor="middle" font-size="10.200" fill="#e9e9e9" font-family="Liberation Sans,sans-serif">150</text><circle cx="70.5" cy="672.5" r="7.2" fill="#000"/><text transform="translate(70.8 691.6) scale(.87 1)" text-anchor="middle" font-size="10.200" fill="#e9e9e9" font-family="Liberation Sans,sans-serif">170</text><circle cx="96.0" cy="672.5" r="7.2" fill="#000"/><text transform="translate(96.3 691.6) scale(.87 1)" text-anchor="middle" font-size="10.200" fill="#e9e9e9" font-family="Liberation Sans,sans-serif">200</text><circle cx="121.5" cy="672.5" r="7.2" fill="#000"/><text transform="translate(121.8 691.6) scale(.87 1)" text-anchor="middle" font-size="10.200" fill="#e9e9e9" font-family="Liberation Sans,sans-serif">250</text><circle cx="146.5" cy="672.5" r="7.2" fill="#000"/><text transform="translate(146.8 691.6) scale(.87 1)" text-anchor="middle" font-size="10.200" fill="#e9e9e9" font-family="Liberation Sans,sans-serif">300</text></g><path d="M32.5 507V688" stroke="#505154" stroke-width="1"/><path d="M57.5 507V688" stroke="#505154" stroke-width="1"/><path d="M82.5 507V688" stroke="#505154" stroke-width="1"/><path d="M108.5 507V688" stroke="#505154" stroke-width="1"/><path d="M133.5 507V688" stroke="#505154" stroke-width="1"/><path d="M158.5 507V688" stroke="#505154" stroke-width="1"/><path d="M33 506.5H159" stroke="#505154" stroke-width="1"/><path d="M33 537.5H159" stroke="#505154" stroke-width="1"/><path d="M33 569.0H159" stroke="#505154" stroke-width="1"/><path d="M33 600.0H159" stroke="#505154" stroke-width="1"/><path d="M33 631.5H159" stroke="#505154" stroke-width="1"/><path d="M33 662.5H159" stroke="#505154" stroke-width="1"/></svg>
<div style="left:159px;top:507px;width:9px;height:181px;background:linear-gradient(90deg,#6e6f73,#7d7e82)"></div>
<div style="left:159px;top:517px;width:9px;height:115px;background:linear-gradient(90deg,#808185,#8b8c90);border:1px solid #6f7074"></div>
<div style="left:159px;top:632px;width:9px;height:46px;background:linear-gradient(90deg,#67686b,#707175)"></div>
<svg style="left:159px;top:507px" width="9" height="181"><path d="M2 6.500h5l-2.500-3zM2 174h5l-2.500 3z" fill="#4a4b4e"/><path d="M2.500 64h4M2.500 66h4M2.500 68h4" stroke="#5f6064" stroke-width=".8"/></svg>
<div style="left:33px;top:688px;width:135px;height:1px;background:#5a5b5e"></div>
<div style="left:33px;top:689px;width:135px;height:15px;background:linear-gradient(#84858a,#77787c)"></div>
<div style="left:33px;top:690px;width:14px;height:13px;background:linear-gradient(#505050,#454545)"></div>
<svg style="left:35px;top:692px" width="10" height="9"><path d="M1 1.500L3.500 4.500L1 7.500Z" fill="#858585"/><path d="M4.500 1.500H9M4.500 4.500H9M4.500 7.500H9" stroke="#858585" stroke-width="1"/></svg>
<div style="left:51px;top:691px;width:13px;height:13px;border-radius:50%;background:conic-gradient(#ff0,#0f0,#0ff,#00f,#f0f,#f00,#ff0);box-shadow:0 1px 0 #ddd"></div>
<div style="left:55.500px;top:695.500px;width:4px;height:4px;border-radius:50%;background:#e8e8e8"></div>
<div style="left:68px;top:690px;width:21px;height:13px;background:linear-gradient(#7e7f83,#6c6d71);border-right:1px solid #626366"></div>
<div style="left:72px;top:693px;width:13px;height:8px;background:repeating-linear-gradient(#909195 0 2px,#6a6b6f 2px 3px);opacity:.8"></div>
<div style="left:90px;top:690px;width:21px;height:13px;background:linear-gradient(#7e7f83,#6c6d71);border-right:1px solid #626366"></div>
<div style="left:94px;top:693px;width:13px;height:8px;background:repeating-linear-gradient(#909195 0 2px,#6a6b6f 2px 3px);opacity:.8"></div>
<div style="left:112px;top:690px;width:21px;height:13px;background:linear-gradient(#7e7f83,#6c6d71);border-right:1px solid #626366"></div>
<div style="left:116px;top:693px;width:13px;height:8px;background:repeating-linear-gradient(#909195 0 2px,#6a6b6f 2px 3px);opacity:.8"></div>
<div style="left:134px;top:690px;width:21px;height:13px;background:linear-gradient(#7e7f83,#6c6d71);border-right:1px solid #626366"></div>
<div style="left:138px;top:693px;width:13px;height:8px;background:repeating-linear-gradient(#909195 0 2px,#6a6b6f 2px 3px);opacity:.8"></div>
<div style="left:157px;top:690px;width:11px;height:14px;background:linear-gradient(#8a8b8f,#77787c);border:1px solid #66676a"></div>
<svg style="left:159px;top:694px" width="7" height="5"><path d="M.5 .5h6l-3 4z" fill="#3f4043"/></svg>
<div style="left:33px;top:704px;width:135px;height:2px;background:#86878b"></div>
<div style="left:162px;top:707px;width:6px;height:161px;background:linear-gradient(90deg,#606165,#6d6e72 50%,#5d5e62)"></div>
<div style="left:33.500px;top:717.500px;width:128px;height:128px;border-radius:50%;background:conic-gradient(from 0deg,#e9f218 0deg,#7fee10 30deg,#12e81c 75deg,#14ea7c 105deg,#12e8e4 130deg,#129cf0 150deg,#1a18f2 180deg,#9a16f0 210deg,#ec18e0 240deg,#f0148c 265deg,#ee1638 290deg,#f23a10 310deg,#f29a10 335deg,#e9f218 360deg);box-shadow:0 0 0 .5px #5c5d60"></div>
<div style="left:44.500px;top:728.500px;width:106px;height:106px;border-radius:50%;background:#7a7b80;box-shadow:0 0 0 .5px #5c5d60"></div>
<div style="left:64px;top:747.500px;width:68px;height:68px;background:linear-gradient(rgba(0,0,0,0),#000),linear-gradient(90deg,#fff,#ff0000);box-shadow:0 0 0 .5px #555"></div>
<div style="left:60px;top:795px;width:7px;height:7px;border-radius:50%;border:1px solid #e6e6e6;box-shadow:0 0 0 .5px #444"></div>
<div style="left:41px;top:747px;width:11px;height:8px;background:#f01818;border:1.500px solid #f2f2f2;box-shadow:0 0 0 .7px #333;transform:rotate(30deg)"></div>
<div style="left:41px;top:843px;width:14px;height:14px;background:#d6d6d6"></div>
<div style="left:33px;top:836px;width:14px;height:14px;background:#3d3d3f;border:1px solid #77c6e8;box-shadow:inset 0 0 0 1px #8e8e8e"></div>
<div style="left:33px;top:859px;width:22px;height:6px;background:#fff;background-image:linear-gradient(45deg,#8a8a8a 25%,transparent 25%,transparent 75%,#8a8a8a 75%),linear-gradient(45deg,#8a8a8a 25%,transparent 25%,transparent 75%,#8a8a8a 75%);background-size:6px 6px;background-position:0 0,3px 3px"></div>
<div style="left:67px;top:858px;width:7px;height:7px;background:#15163a"></div><div class="t" style="left:67px;top:858px;width:7px;height:7px;line-height:7px;font-size:6px;font-weight:bold;color:#c9cdf0;text-align:center">H</div>
<div style="left:92px;top:858px;width:7px;height:7px;background:#15163a"></div><div class="t" style="left:92px;top:858px;width:7px;height:7px;line-height:7px;font-size:6px;font-weight:bold;color:#c9cdf0;text-align:center">S</div>
<div style="left:117px;top:858px;width:7px;height:7px;background:#15163a"></div><div class="t" style="left:117px;top:858px;width:7px;height:7px;line-height:7px;font-size:6px;font-weight:bold;color:#c9cdf0;text-align:center">V</div>
<div class="t" style="left:82px;top:855px;font-size:10px;color:#dcdcdc">0</div>
<div class="t" style="left:108px;top:855px;font-size:10px;color:#dcdcdc">0</div>
<div class="t" style="left:129px;top:855px;font-size:10px;color:#dcdcdc">24</div>
<div style="left:146px;top:851px;width:14px;height:14px;border-radius:50%;background:conic-gradient(#ff0,#0f0,#0ff,#00f,#f0f,#f00,#ff0)"></div>
<div style="left:148.500px;top:853.500px;width:9px;height:9px;border-radius:50%;background:#6a5a50"></div>
<svg style="left:150px;top:855px" width="7" height="7"><path d="M1 .5l5 3-5 3z" fill="#e04a20"/></svg>
<!-- right icon column + navigator / layer property / layer panels -->
<div style="left:1401px;top:37px;width:199px;height:17px;background:linear-gradient(#6b6b6b 0,#5f5f5f 1px,#4b4b4b 15px,#444 16px,#6d6d6f 17px)"></div>
<div style="left:1435px;top:37px;width:1px;height:17px;background:#3f3f3f"></div>
<svg style="left:1407px;top:41px" width="5" height="9"><path d="M4 0.500 L0.800 4.5 L4 8.5" fill="none" stroke="#8e8e8e" stroke-width="2"/></svg>
<svg style="left:1425px;top:41px" width="5" height="9"><path d="M0.800 0.500 L4 4.5 L0.800 8.5" fill="none" stroke="#8e8e8e" stroke-width="2"/></svg>
<svg style="left:1429px;top:41px" width="5" height="9"><path d="M0.800 0.500 L4 4.5 L0.800 8.5" fill="none" stroke="#8e8e8e" stroke-width="2"/></svg>
<svg style="left:1573px;top:41px" width="5" height="9"><path d="M0.800 0.500 L4 4.5 L0.800 8.5" fill="none" stroke="#8e8e8e" stroke-width="2"/></svg>
<svg style="left:1590px;top:41px" width="5" height="9"><path d="M0.800 0.500 L4 4.5 L0.800 8.5" fill="none" stroke="#8e8e8e" stroke-width="2"/></svg>
<svg style="left:1594px;top:41px" width="5" height="9"><path d="M0.800 0.500 L4 4.5 L0.800 8.5" fill="none" stroke="#8e8e8e" stroke-width="2"/></svg>
<div style="left:1437px;top:42px;width:1px;height:8px;background:#666"></div><div style="left:1439px;top:42px;width:1px;height:8px;background:#666"></div><div style="left:1441px;top:42px;width:1px;height:8px;background:#666"></div>
<div style="left:1401px;top:54px;width:4.500px;height:370px;background:linear-gradient(90deg,#4e4e50,#545456)"></div>
<div style="left:1433px;top:54px;width:3px;height:814px;background:linear-gradient(90deg,#585858,#4f4f4f 60%,#666)"></div>
<svg width="0" height="0"><defs><linearGradient id="fg" x1="0" y1="0" x2="1" y2="1"><stop offset="0" stop-color="#c9c9cb"/><stop offset="1" stop-color="#77787c"/></linearGradient></defs></svg>
<div style="left:1405.500px;top:55px;width:27px;height:30.500px;background:linear-gradient(#808186,#77787c);box-shadow:inset 0 0 0 1px rgba(70,70,72,.35)"></div>
<svg style="left:1405.500px;top:55px" width="27" height="30" viewBox="0 0 27 30"><g transform="translate(1.2 4.3)"><path d="M3.500 5.500q0-2 2-2.400l3.600-.6 1.600 1.800h2.300v9.700l-9 1.500z" fill="url(#fg)" opacity=".9"/><path d="M15.500 8v11M11.500 11h8M15.500 14l-2 5M15.500 14l2 5" stroke="#3a3a3c" stroke-width="1.300" fill="none"/><circle cx="15.500" cy="7.500" r="1.300" fill="#3a3a3c"/></g></svg>
<div style="left:1405.500px;top:88.5px;width:27px;height:30.500px;background:linear-gradient(#808186,#77787c);box-shadow:inset 0 0 0 1px rgba(70,70,72,.35)"></div>
<svg style="left:1405.500px;top:88.5px" width="27" height="30" viewBox="0 0 27 30"><g transform="translate(.5 1.3)"><circle cx="12.500" cy="14" r="9" fill="url(#fg)" stroke="#2d2d2f" stroke-width="2.400"/><path d="M12 13l9 9" stroke="#2d2d2f" stroke-width="2.200"/><path d="M11 12v5M11 12h5" stroke="#2d2d2f" stroke-width="1.800" fill="none"/></g></svg>
<div style="left:1405.500px;top:122.5px;width:27px;height:30.500px;background:linear-gradient(#808186,#77787c);box-shadow:inset 0 0 0 1px rgba(70,70,72,.35)"></div>
<svg style="left:1405.500px;top:122.5px" width="27" height="30" viewBox="0 0 27 30"><g transform="translate(1.2 4.3)"><path d="M3.500 5.500q0-2 2-2.400l3.600-.6 1.600 1.800h2.300v9.700l-9 1.500z" fill="url(#fg)" opacity=".9"/><rect x="9" y="10" width="13" height="12" fill="#35a5e8"/><path d="M10 11l11 10M21 11l-11 10" stroke="#f0e68a" stroke-width="3" stroke-linecap="round"/></g></svg>
<div style="left:1405.500px;top:156px;width:27px;height:30.500px;background:linear-gradient(#808186,#77787c);box-shadow:inset 0 0 0 1px rgba(70,70,72,.35)"></div>
<svg style="left:1405.500px;top:156px" width="27" height="30" viewBox="0 0 27 30"><g transform="translate(1.2 4.3)"><path d="M3.500 5.500q0-2 2-2.400l3.600-.6 1.600 1.800h2.300v9.700l-9 1.500z" fill="url(#fg)" opacity=".9"/><path d="M10.500 9.500h4.500v3.500h-4.500zM16 9.500h5v3.500h-5zM10.500 14.500h10.500v2h-10.500zM10.500 18l7-1.500v4.500h-7zM19 16.500h2v4.500h-2z" fill="#fafafa"/></g></svg>
<div style="left:1405.500px;top:190px;width:27px;height:30.500px;background:linear-gradient(#808186,#77787c);box-shadow:inset 0 0 0 1px rgba(70,70,72,.35)"></div>
<svg style="left:1405.500px;top:190px" width="27" height="30" viewBox="0 0 27 30"><g transform="translate(1.2 4.3)"><path d="M3.500 5.500q0-2 2-2.400l3.600-.6 1.600 1.800h2.300v9.700l-9 1.500z" fill="url(#fg)" opacity=".9"/><path d="M9.500 10.500l11 11M20.500 10.500l-11 11" stroke="#f0f0f0" stroke-width="1"/><path d="M9.500 10.500h11l-5.500 5.500zM9.500 21.500h11l-5.500-5.500z" fill="#56575a"/><path d="M9.500 10.500v11l5.500-5.500zM20.500 10.500v11l-5.500-5.500z" fill="#c9c9cb"/></g></svg>
<div style="left:1405.500px;top:223.5px;width:27px;height:30.500px;background:linear-gradient(#808186,#77787c);box-shadow:inset 0 0 0 1px rgba(70,70,72,.35)"></div>
<svg style="left:1405.500px;top:223.5px" width="27" height="30" viewBox="0 0 27 30"><g transform="translate(1.2 4.3)"><path d="M3.500 5.500q0-2 2-2.400l3.600-.6 1.600 1.800h2.300v9.700l-9 1.500z" fill="url(#fg)" opacity=".9"/><rect x="9.500" y="10" width="12" height="12" fill="#fdfdfd"/><rect x="9.5" y="10.0" width="2.400" height="2.400" fill="#161616"/><rect x="14.3" y="10.0" width="2.400" height="2.400" fill="#161616"/><rect x="19.1" y="10.0" width="2.400" height="2.400" fill="#161616"/><rect x="11.9" y="12.4" width="2.400" height="2.400" fill="#161616"/><rect x="16.7" y="12.4" width="2.400" height="2.400" fill="#161616"/><rect x="9.5" y="14.8" width="2.400" height="2.400" fill="#161616"/><rect x="14.3" y="14.8" width="2.400" height="2.400" fill="#161616"/><rect x="19.1" y="14.8" width="2.400" height="2.400" fill="#161616"/><rect x="11.9" y="17.2" width="2.400" height="2.400" fill="#161616"/><rect x="16.7" y="17.2" width="2.400" height="2.400" fill="#161616"/><rect x="9.5" y="19.6" width="2.400" height="2.400" fill="#161616"/><rect x="14.3" y="19.6" width="2.400" height="2.400" fill="#161616"/><rect x="19.1" y="19.6" width="2.400" height="2.400" fill="#161616"/></g></svg>
<div style="left:1405.500px;top:257.5px;width:27px;height:30.500px;background:linear-gradient(#808186,#77787c);box-shadow:inset 0 0 0 1px rgba(70,70,72,.35)"></div>
<svg style="left:1405.500px;top:257.5px" width="27" height="30" viewBox="0 0 27 30"><g transform="translate(1.2 4.3)"><path d="M3.500 5.500q0-2 2-2.400l3.600-.6 1.600 1.800h2.300v9.700l-9 1.500z" fill="url(#fg)" opacity=".9"/><path d="M10.500 9.500h4.500v3.500h-4.500zM16 9.500h5v3.500h-5zM10.500 14.500h10.500v2h-10.500zM10.500 18l7-1.500v4.500h-7zM19 16.500h2v4.500h-2z" fill="#fafafa"/></g></svg>
<div style="left:1405.500px;top:291px;width:27px;height:30.500px;background:linear-gradient(#808186,#77787c);box-shadow:inset 0 0 0 1px rgba(70,70,72,.35)"></div>
<svg style="left:1405.500px;top:291px" width="27" height="30" viewBox="0 0 27 30"><g transform="translate(1.2 4.3)"><path d="M3.500 5.500q0-2 2-2.400l3.600-.6 1.600 1.800h2.300v9.700l-9 1.500z" fill="url(#fg)" opacity=".9"/><path d="M9 10l4 4M21 10l-4 4M9 22l4-4M21 22l-4-4M15 9v3M15 23v-3" stroke="#3a3a3c" stroke-width="1.600"/></g></svg>
<div style="left:1405.500px;top:325px;width:27px;height:30.500px;background:linear-gradient(#808186,#77787c);box-shadow:inset 0 0 0 1px rgba(70,70,72,.35)"></div>
<svg style="left:1405.500px;top:325px" width="27" height="30" viewBox="0 0 27 30"><g transform="translate(1.2 4.3)"><path d="M3.500 5.500q0-2 2-2.400l3.600-.6 1.600 1.800h2.300v9.700l-9 1.500z" fill="url(#fg)" opacity=".9"/><path d="M9.500 15h9v7h-9z" fill="#f4f4f4"/><path d="M19 10v7" stroke="#222" stroke-width="1.800"/><path d="M16.500 16h5l-2.500 3.500z" fill="#222"/></g></svg>
<div style="left:1405.500px;top:358.5px;width:27px;height:30.500px;background:linear-gradient(#808186,#77787c);box-shadow:inset 0 0 0 1px rgba(70,70,72,.35)"></div>
<svg style="left:1405.500px;top:358.5px" width="27" height="30" viewBox="0 0 27 30"><g transform="translate(1.2 4.3)"><path d="M3.500 5.500q0-2 2-2.400l3.600-.6 1.600 1.800h2.300v9.700l-9 1.500z" fill="url(#fg)" opacity=".9"/><rect x="10.500" y="12.500" width="10" height="9" fill="#86878b" stroke="#444"/><path d="M12.500 19.500l6.500-6 1.800 1.800-6.300 5.200z" fill="#1f1f1f"/></g></svg>
<div style="left:1405.500px;top:392.5px;width:27px;height:30.500px;background:linear-gradient(#808186,#77787c);box-shadow:inset 0 0 0 1px rgba(70,70,72,.35)"></div>
<svg style="left:1405.500px;top:392.5px" width="27" height="30" viewBox="0 0 27 30"><g transform="translate(1.2 4.3)"><path d="M3.500 5.500q0-2 2-2.400l3.600-.6 1.600 1.800h2.300v9.700l-9 1.500z" fill="url(#fg)" opacity=".9"/><path d="M10 13l6-2 5.500 2v7l-5.500 2.500-6-2.500z" fill="#fafafa" stroke="#bbb" stroke-width=".6"/><path d="M10 13l6 2 5.500-2M16 15v7.500" fill="none" stroke="#9a9a9a" stroke-width=".8"/></g></svg>
<div style="left:1436px;top:54px;width:1px;height:814px;background:#66676b"></div>
<div style="left:1436px;top:54.5px;width:164px;height:12.500px;background:linear-gradient(#595959,#464646)"></div>
<div style="left:1436px;top:54.5px;width:13px;height:13px;background:linear-gradient(#505050,#454545)"></div>
<svg style="left:1438px;top:56.5px" width="10" height="9"><path d="M1 1.500L3.500 4.500L1 7.500Z" fill="#858585"/><path d="M4.500 1.500H9M4.500 4.500H9M4.500 7.500H9" stroke="#858585" stroke-width="1"/></svg>
<div style="left:1450px;top:54.5px;width:60px;height:17px;background:#7a7b80"></div>
<svg style="left:1452px;top:57px" width="16" height="12"><rect x="5" y="4" width="9" height="7" fill="#e8e8e8"/><rect x="1.500" y="1.500" width="8" height="6" fill="#fff" stroke="#ee1c24" stroke-width="1.600"/></svg>
<div class="t" style="left:1470px;top:56.5px;font-size:8px;font-weight:400;letter-spacing:-.1px;word-spacing:1.500px;color:#dedede">내비게이터</div>
<div style="left:1511px;top:54.5px;width:21px;height:12.500px;background:linear-gradient(#77787c,#6d6e72);box-shadow:1px 0 0 #5f5f62"></div>
<div style="left:1533px;top:54.5px;width:21px;height:12.500px;background:linear-gradient(#77787c,#6d6e72);box-shadow:1px 0 0 #5f5f62"></div>
<div style="left:1555px;top:54.5px;width:21px;height:12.500px;background:linear-gradient(#77787c,#6d6e72);box-shadow:1px 0 0 #5f5f62"></div>
<div style="left:1436px;top:67.0px;width:164px;height:4.500px;background:linear-gradient(#7c7d81,#77787c)"></div>
<div style="left:1450px;top:54.5px;width:60px;height:17px;background:#7a7b80"></div>
<svg style="left:1452px;top:57px" width="16" height="12"><rect x="5" y="4" width="9" height="7" fill="#e8e8e8"/><rect x="1.500" y="1.500" width="8" height="6" fill="#fff" stroke="#ee1c24" stroke-width="1.600"/></svg>
<div class="t" style="left:1470px;top:56.5px;font-size:8px;font-weight:400;letter-spacing:-.1px;word-spacing:1.500px;color:#dedede">내비게이터</div>
<svg style="left:1511px;top:54px" width="66" height="14"><path d="M6 4h11v8h-11z" fill="#b9b9bb"/><path d="M6 4h11v2h-11z" fill="#3c3c3c"/><path d="M28 11l2-4h7l2 4z" fill="#a6a7aa"/><circle cx="33.500" cy="6" r="2.500" fill="#9a9b9e"/><circle cx="55" cy="7.500" r="5" fill="#515154"/><path d="M55 4v2M55 7v4" stroke="#d8d8d8" stroke-width="1.800"/></svg>
<div style="left:1437px;top:71px;width:159px;height:143px;background:#454545"></div>
<div style="left:1472px;top:72px;width:85.500px;height:141.500px;background:#fff"></div>
<div style="left:1488px;top:100px;width:56px;height:35px;border:1px solid #ee1c24"></div>
<svg style="left:1509px;top:105px" width="10" height="16" viewBox="0 0 10 16"><path d="M5 .5l.5 5 2.500 2.500-.5 4-2.500 2.500-2.500-2.500-.5-4 2.500-2.500z" fill="#8a8a8a" filter="url(#b1)"/><path d="M3 9h4" stroke="#444" stroke-width=".8"/></svg>
<div style="left:1595.500px;top:54px;width:4.500px;height:814px;background:linear-gradient(90deg,#5f6063,#7b7c80 25%,#7b7c80)"></div>
<div style="left:1438px;top:219px;width:74px;height:11px;background:#7a7b80;border:1px solid #5e5f62"></div>
<svg style="left:1438px;top:219px" width="74" height="11" viewBox="0 0 74 11"><path d="M1 10L73 1V10Z" fill="#2e2e30"/></svg>
<div style="left:1481px;top:216px;width:2px;height:17px;background:#77787c;box-shadow:0 0 0 .5px #5c5d60"></div>
<div class="t" style="left:1439.5px;top:218.5px;font-size:9.300px;color:#e2e2e2;letter-spacing:-.1px">100.0</div>
<div style="left:1438px;top:234px;width:74px;height:11px;background:#7a7b80;border:1px solid #5e5f62"></div>
<svg style="left:1438px;top:234px" width="74" height="11" viewBox="0 0 74 11"><path d="M38.500 10.500V7C44 1.500 52 -.5 58 3S70 9 73.500 10.500Z" fill="#2e2e30"/><path d="M27.500 10.500L37.500 6.800V10.500Z" fill="#2e2e30"/><path d="M.5 .5V10.500H4.500Z" fill="#2e2e30"/></svg>
<div style="left:1475px;top:231px;width:2px;height:17px;background:#77787c;box-shadow:0 0 0 .5px #5c5d60"></div>
<div class="t" style="left:1442px;top:233.5px;font-size:9.300px;color:#e2e2e2;letter-spacing:-.1px">0.0</div>
<svg style="left:1515px;top:215px" width="82" height="34" viewBox="0 0 82 34"><circle cx="7.500" cy="7.500" r="4.600" fill="#e9e9e9" stroke="#fff" stroke-width="1.200"/><path d="M5 7.500h5" stroke="#333" stroke-width="1.400"/><path d="M11 11l3 3.500" stroke="#333" stroke-width="1.500"/><circle cx="23" cy="7.500" r="4.600" fill="#e9e9e9" stroke="#fff" stroke-width="1.200"/><path d="M20.500 7.500h5M23 5v5" stroke="#333" stroke-width="1.400"/><path d="M26.500 11l3 3.500" stroke="#333" stroke-width="1.500"/><rect x="31.500" y="1.500" width="15" height="15" fill="#2b2b2b" stroke="#262626" stroke-width="1"/><rect x="34" y="4" width="10" height="10" fill="#1c1c1c" stroke="#555" stroke-width="1"/><rect x="49.500" y="2" width="14" height="14" fill="#2a2a2a"/><path d="M50 5h8v6h-8zM55 10h8v5h-8z" fill="#f0f0f0"/><path d="M56 6l6 7" stroke="#222" stroke-width="1.600"/><rect x="65.500" y="2" width="15" height="14" fill="#f2f6f8"/><path d="M65.500 2h15v2h-15z" fill="#2a2a2a"/><path d="M68 6l10 8" stroke="#222" stroke-width="1.800"/><path d="M3.500 28.500v-2a4.800 4.800 0 0 1 9.600 0v4" fill="none" stroke="#1c1c1e" stroke-width="2.700"/><path d="M.3 27h6.400l-3.200 4.300z" fill="#1c1c1e"/><path d="M17.500 30.500v-4a4.800 4.800 0 0 1 9.600 0v2" fill="none" stroke="#1c1c1e" stroke-width="2.700"/><path d="M23.900 27h6.400l-3.200 4.300z" fill="#1c1c1e"/><circle cx="39" cy="26" r="5.500" fill="none" stroke="#66676b" stroke-width="1.600" stroke-dasharray="1.600 2.700"/><path d="M52.500 27.500a4.800 4.800 0 0 1 9.600-1.500" fill="none" stroke="#2a2a2c" stroke-width="2.600"/><path d="M59 24h5.500l-1 4.500z" fill="#2a2a2c"/><path d="M50 25.500l3.500 3.200-3.500 3.200z" fill="#f4f4f4"/><path d="M64 27l-3.500 3 3.500 3z" fill="#1f1f21"/><path d="M57 23v10" stroke="#2a2a2c" stroke-width="1.300" stroke-dasharray="1.200 1"/><path d="M69 30a4.800 4.800 0 0 1 2-8.500" fill="none" stroke="#2a2a2c" stroke-width="2.600"/><path d="M70 19.500l4.500 2.500-4 3z" fill="#2a2a2c"/><path d="M72.500 19.500h7l-3.500 3.300z" fill="#1f1f21"/><path d="M72.500 33.500h7l-3.500-3.300z" fill="#f4f4f4"/><path d="M71 26.500h10" stroke="#2a2a2c" stroke-width="1.300" stroke-dasharray="1.200 1"/></svg>
<div style="left:1437px;top:248px;width:159px;height:1px;background:#66676a"></div>
<div style="left:1436px;top:250px;width:164px;height:12.500px;background:linear-gradient(#595959,#464646)"></div>
<div style="left:1436px;top:250px;width:13px;height:13px;background:linear-gradient(#505050,#454545)"></div>
<svg style="left:1438px;top:252px" width="10" height="9"><path d="M1 1.500L3.500 4.500L1 7.500Z" fill="#858585"/><path d="M4.500 1.500H9M4.500 4.500H9M4.500 7.500H9" stroke="#858585" stroke-width="1"/></svg>
<div style="left:1450px;top:250px;width:62px;height:17px;background:#7a7b80"></div>
<svg style="left:1452px;top:251px" width="16" height="16"><path d="M2.500 9l4 3 7-10" fill="none" stroke="#e0141c" stroke-width="1.500"/><rect x="2" y="12.500" width="11" height="2.500" fill="#1c1c1c"/><rect x="2" y="15" width="11" height="1" fill="#eee"/></svg>
<div class="t" style="left:1470px;top:252px;font-size:8px;font-weight:400;letter-spacing:-.1px;word-spacing:1.500px;color:#dedede">레이어 속성</div>
<div style="left:1514px;top:250px;width:21px;height:12.500px;background:linear-gradient(#77787c,#6d6e72);box-shadow:1px 0 0 #5f5f62"></div>
<div style="left:1536px;top:250px;width:21px;height:12.500px;background:linear-gradient(#77787c,#6d6e72);box-shadow:1px 0 0 #5f5f62"></div>
<div style="left:1436px;top:262.5px;width:164px;height:4.500px;background:linear-gradient(#7c7d81,#77787c)"></div>
<div style="left:1450px;top:250px;width:62px;height:17px;background:#7a7b80"></div>
<svg style="left:1452px;top:251px" width="16" height="16"><path d="M2.500 9l4 3 7-10" fill="none" stroke="#e0141c" stroke-width="1.500"/><rect x="2" y="12.500" width="11" height="2.500" fill="#1c1c1c"/><rect x="2" y="15" width="11" height="1" fill="#eee"/></svg>
<div class="t" style="left:1470px;top:252px;font-size:8px;font-weight:400;letter-spacing:-.1px;word-spacing:1.500px;color:#dedede">레이어 속성</div>
<svg style="left:1514px;top:250px" width="44" height="14"><path d="M5 5h10M5 8h6" stroke="#a2a3a6" stroke-width="1.400"/><ellipse cx="12" cy="10.500" rx="3" ry="2" fill="#a6a7aa"/><path d="M30 12l2-6h3l2 6z" fill="#a2a3a6"/><path d="M32.500 3h2v3h-2z" fill="#8e8f93"/></svg>
<div style="left:1437px;top:267px;width:1px;height:176px;background:#66676a"></div>
<div style="left:1587px;top:267px;width:9px;height:176px;background:linear-gradient(90deg,#66676b,#6f7074 30%,#6f7074 80%,#85868a)"></div>
<div class="t" style="left:1442px;top:268px;color:#e2e2e2;font-size:10px">효과</div>
<div style="left:1464px;top:274px;width:120px;height:1px;background:#6c6d71;box-shadow:0 1px 0 #85868a"></div>
<div style="left:1520px;top:280px;width:64px;height:15px;background:linear-gradient(#86878b,#727377);border:1px solid #66676a;border-radius:2px"></div>
<svg style="left:1520px;top:280px" width="64" height="15" viewBox="0 0 64 15"><circle cx="8" cy="7.500" r="4.300" fill="#1e1e1e" stroke="#fff" stroke-width="2"/><rect x="21" y="1.500" width="12" height="12" fill="#2a2a2a"/><path d="M21 4.500h12M21 7.500h12M21 10.500h12" stroke="#7a7b80" stroke-width="1" stroke-dasharray="1.500 1.500"/><path d="M22.500 3h12M22.500 6h12M22.500 9h12M22.500 12h12" stroke="#7a7b80" stroke-width="1" stroke-dasharray="1.500 1.500" stroke-dashoffset="1.500"/><rect x="41" y="3.500" width="10" height="10" fill="#f2f2f2"/><rect x="39" y="1.500" width="10" height="10" fill="#46b4f4"/><path d="M54 6h7l-3.500 4z" fill="#333"/></svg>
<div class="t" style="left:1442px;top:297px;color:#e2e2e2;font-size:10px">표현색</div>
<div style="left:1472px;top:303px;width:112px;height:1px;background:#6c6d71;box-shadow:0 1px 0 #85868a"></div>
<div style="left:1448px;top:312px;width:96px;height:15px;background:linear-gradient(#86878b,#727377);border:1px solid #66676a;border-radius:2px"></div>
<div style="left:1474px;top:313px;width:4.500px;height:13px;background:#f87474"></div><div style="left:1478.500px;top:313px;width:4.500px;height:13px;background:#62b2f6"></div><div style="left:1483px;top:313px;width:4.500px;height:13px;background:#72ea72"></div>
<div class="t" style="left:1490px;top:314px;color:#e2e2e2;font-size:10px">컬러</div>
<svg style="left:1534px;top:317px" width="8" height="6"><path d="M.5 .5h7l-3.500 4.500z" fill="#333"/></svg>
<div style="left:1437px;top:442px;width:159px;height:2px;background:linear-gradient(#6a6b6e,#86878b)"></div>
<div style="left:1436px;top:445px;width:164px;height:12.500px;background:linear-gradient(#595959,#464646)"></div>
<div style="left:1436px;top:445px;width:13px;height:13px;background:linear-gradient(#505050,#454545)"></div>
<svg style="left:1438px;top:447px" width="10" height="9"><path d="M1 1.500L3.500 4.500L1 7.500Z" fill="#858585"/><path d="M4.500 1.500H9M4.500 4.500H9M4.500 7.500H9" stroke="#858585" stroke-width="1"/></svg>
<div style="left:1450px;top:445px;width:45px;height:17px;background:#7a7b80"></div>
<svg style="left:1453px;top:447px" width="14" height="13"><path d="M1 3.500l6-2.500 6 2.500-6 2.500zM1 7l6-2 6 2-6 2.500zM1 10.500l6-2 6 2-6 2.500z" fill="#f2f2f2" stroke="#8c8c8c" stroke-width=".5"/></svg>
<div class="t" style="left:1470px;top:447px;font-size:8px;font-weight:400;letter-spacing:-.1px;word-spacing:1.500px;color:#dedede">레이어</div>
<div style="left:1496px;top:445px;width:20px;height:12.500px;background:linear-gradient(#77787c,#6d6e72);box-shadow:1px 0 0 #5f5f62"></div>
<div style="left:1518px;top:445px;width:20px;height:12.500px;background:linear-gradient(#77787c,#6d6e72);box-shadow:1px 0 0 #5f5f62"></div>
<div style="left:1436px;top:457.5px;width:164px;height:4.500px;background:linear-gradient(#7c7d81,#77787c)"></div>
<div style="left:1450px;top:445px;width:45px;height:17px;background:#7a7b80"></div>
<svg style="left:1453px;top:447px" width="14" height="13"><path d="M1 3.500l6-2.500 6 2.500-6 2.500zM1 7l6-2 6 2-6 2.500zM1 10.500l6-2 6 2-6 2.500z" fill="#f2f2f2" stroke="#8c8c8c" stroke-width=".5"/></svg>
<div class="t" style="left:1470px;top:447px;font-size:8px;font-weight:400;letter-spacing:-.1px;word-spacing:1.500px;color:#dedede">레이어</div>
<svg style="left:1496px;top:445px" width="44" height="14"><path d="M4 2h8v11h-8z" fill="#c9c9cb"/><circle cx="8" cy="9" r="3.500" fill="none" stroke="#2c2c2c" stroke-width="1.500"/><circle cx="13" cy="9" r="3" fill="none" stroke="#e0e0e0" stroke-width="1.400"/><path d="M26 10q3-7 6-2t5-3" fill="none" stroke="#8d8e92" stroke-width="1.400"/></svg>
<div style="left:1437px;top:462px;width:78px;height:14px;background:linear-gradient(#86878b,#727377);border:1px solid #66676a;border-radius:2px"></div>
<div class="t" style="left:1437px;top:463px;width:68px;text-align:center;color:#e2e2e2;font-size:10px">표준</div>
<svg style="left:1505px;top:467px" width="8" height="6"><path d="M.5 .5h7l-3.500 4.500z" fill="#333"/></svg>
<div style="left:1520px;top:465px;width:46px;height:7px;background:#f2f2f2;background-image:linear-gradient(45deg,#c4c4c4 25%,transparent 25%,transparent 75%,#c4c4c4 75%),linear-gradient(45deg,#c4c4c4 25%,transparent 25%,transparent 75%,#c4c4c4 75%);background-size:6px 6px;background-position:0 0,3px 3px;box-shadow:0 0 0 1px #5f6063"></div>
<div style="left:1566px;top:461px;width:2px;height:17px;background:#808185;box-shadow:0 0 0 .5px #5c5d60"></div>
<div class="t" style="left:1572.500px;top:463px;color:#e2e2e2;font-size:10px;letter-spacing:-.3px">100</div>
<svg style="left:1589px;top:464px" width="7" height="10"><path d="M3.500 .5l3 3.500h-6zM3.500 9.500l3-3.500h-6z" fill="#333"/></svg>
<svg style="left:1436px;top:477px" width="162" height="18" viewBox="0 0 162 18"><rect x="1.500" y="2.500" width="14" height="12" fill="#7b7c81" stroke="#3a3a3c"/><rect x="17.500" y="1.500" width="9" height="15" fill="#808185"/><path d="M19 7.500h6l-3 3.500z" fill="#3a3a3c"/><ellipse cx="39" cy="9" rx="7.500" ry="5.500" fill="#9c9da0" stroke="#444"/><ellipse cx="39" cy="8" rx="6" ry="2.500" fill="#1f1f1f"/><path d="M32 5q7-5 14 0" fill="none" stroke="#666" stroke-dasharray="1.500 1"/><path d="M53.500 16l1-8h2l1 8z" fill="#c9c9cb" stroke="#444" stroke-width=".6"/><path d="M51 4l4.500 2 4.500-2v3l-4.500-1-4.500 1z" fill="#ddd"/><rect x="54" y="2" width="3" height="5" fill="#333"/><path d="M68 2h5l.5 8-3 5.500-3-5.500z" fill="#19aee0"/><path d="M67.800 8h5.500l-.2 2.500-2.600 5-2.500-5z" fill="#f2c81e"/><path d="M69.500 13.500h2l-1 2z" fill="#19aee0"/><rect x="81.500" y="7.500" width="10" height="8" rx="1" fill="#6f7074" stroke="#4a4b4e"/><path d="M83.500 7.500v-2.500a3 3 0 0 1 6 0v2.500" fill="none" stroke="#5c5d60" stroke-width="1.600"/><path d="M86.500 10v3" stroke="#3a3a3c" stroke-width="1.400"/><rect x="97.500" y="5.500" width="6" height="5" fill="#f4f4f4" stroke="#aaa" stroke-width=".5"/><path d="M98.800 5.500v-1.800a1.800 1.800 0 0 1 3.600 0v1.800" fill="none" stroke="#f4f4f4" stroke-width="1.200"/><path d="M103 10h3v3h-3zM106 13h3v3h-3z" fill="#f8f8f8"/><path d="M106 10h3v3h-3zM103 13h3v3h-3z" fill="#8e8f93"/><rect x="110.500" y="1.500" width="24" height="15" rx="1" fill="#85868a" stroke="#6f7074"/><path d="M114 5v6h7v-6" fill="none" stroke="#9d9ea2" stroke-width="1.400"/><path d="M126 6.500h6l-3 3.500z" fill="#707175"/><path d="M122 11l4 4M126 11l-4 4" stroke="#707175"/><rect x="136.500" y="1.500" width="24" height="15" rx="1" fill="#85868a" stroke="#6f7074"/><path d="M140 13l8-9h-8z" fill="none" stroke="#9d9ea2" stroke-width="1.400"/><path d="M152 6.500h6l-3 3.500z" fill="#707175"/><path d="M147 11l4 4M151 11l-4 4" stroke="#707175"/></svg>
<svg style="left:1436px;top:494px" width="162" height="18" viewBox="0 0 162 18"><path d="M2 5.500l6-2.500 6 2.500-6 2.500zM2 9l6-2 6 2-6 2.500zM2 12.500l6-2 6 2-6 2.500z" fill="#f2f2f2" stroke="#8c8c8c" stroke-width=".5"/><path d="M38.500 1.500h11v9l-4 5h-7z" fill="#fafcfe" stroke="#b8bcc0" stroke-width=".5"/><path d="M49.500 10.500l-4 5v-5z" fill="#77787c"/><path d="M53.500 2.500h9v12h-9z" fill="#f2f4f6" stroke="#b8bcc0" stroke-width=".5"/><circle cx="63" cy="13" r="2.500" fill="#e8e8e8" stroke="#999" stroke-width=".6"/><path d="M68.500 3.500h5l1.500 1.500h5v9h-11.500z" fill="#b9babd"/><path d="M76 8h6v7h-6z" fill="#fafafa" stroke="#aaa" stroke-width=".5"/><path d="M88 3.500h5v4h1.500l-4 4.500-4-4.500h1.500z" fill="#8f9094" stroke="#6c6d71" stroke-width=".8"/><path d="M98.500 7l6.500-4 6.500 4-6.500 8z" fill="#1f1f21"/><path d="M100 12l5-2.500 5 2.500-5 3z" fill="#f2f2f2"/><path d="M105 4.500v5" stroke="#eee" stroke-width="1.600"/><rect x="113.500" y="3.500" width="15" height="11" fill="url(#mk)"/><defs><linearGradient id="mk" x1="0" x2="1"><stop offset="0" stop-color="#9a9a9c"/><stop offset="1" stop-color="#2a2a2a"/></linearGradient></defs><ellipse cx="121" cy="9" rx="3.200" ry="2.800" fill="#fff"/><path d="M133.500 3v12" stroke="#6a6b6f"/><path d="M137 6q4-3 6 1t5 1" fill="none" stroke="#8f9094" stroke-width="1.600"/><path d="M149.500 7h10l-1 9h-8z" fill="#f2f2f2" stroke="#b0b0b0" stroke-width=".6"/><ellipse cx="154.500" cy="5.500" rx="5.500" ry="2" fill="#fff" stroke="#9c9c9c" stroke-width=".6"/><path d="M152 4q2.500-3 5 0" fill="none" stroke="#e8e8e8"/><path d="M152.500 9.500v5M154.500 9.500v5M156.500 9.500v5" stroke="#a8a8a8" stroke-width=".7"/></svg>
<div style="left:1437px;top:512px;width:159px;height:1px;background:#606164"></div>
<div style="left:1437px;top:513px;width:1px;height:355px;background:#5f6063"></div>
<div style="left:1587px;top:513px;width:9px;height:355px;background:linear-gradient(90deg,#66676b,#6f7074 30%,#6f7074 80%,#85868a)"></div>
<div style="left:1438px;top:537.5px;width:149px;height:1px;background:#5d5e61"></div>
<svg style="left:1440px;top:521px" width="10" height="8" viewBox="0 0 10 8"><path d="M.5 4q4.500-4.500 9 0q-4.500 3.500-9 0z" fill="#eaeaea" stroke="#4a4a4c" stroke-width=".6"/><circle cx="5" cy="4" r="2.100" fill="#161616"/><circle cx="5.800" cy="3.300" r=".6" fill="#ddd"/></svg>
<div style="left:1471px;top:515px;width:16px;height:21px;background:#fff;background-image:linear-gradient(45deg,#d6d6d6 25%,transparent 25%,transparent 75%,#d6d6d6 75%),linear-gradient(45deg,#d6d6d6 25%,transparent 25%,transparent 75%,#d6d6d6 75%);background-size:4px 4px;background-position:0 0,2px 2px;border:1px solid #48494c;box-shadow:0 0 0 .5px #48494c"></div>
<div class="t" style="left:1489px;top:515px;color:#e8e8e8;font-size:9px;letter-spacing:-.15px">100 % 표준</div>
<div class="t" style="left:1489px;top:526px;color:#e8e8e8;font-size:9.700px;word-spacing:1px">레이어 4</div>
<div style="left:1438px;top:563.0px;width:149px;height:1px;background:#5d5e61"></div>
<svg style="left:1440px;top:546.5px" width="10" height="8" viewBox="0 0 10 8"><path d="M.5 4q4.500-4.500 9 0q-4.500 3.500-9 0z" fill="#eaeaea" stroke="#4a4a4c" stroke-width=".6"/><circle cx="5" cy="4" r="2.100" fill="#161616"/><circle cx="5.800" cy="3.300" r=".6" fill="#ddd"/></svg>
<div style="left:1471px;top:540.5px;width:16px;height:21px;background:#fff;background-image:linear-gradient(45deg,#d6d6d6 25%,transparent 25%,transparent 75%,#d6d6d6 75%),linear-gradient(45deg,#d6d6d6 25%,transparent 25%,transparent 75%,#d6d6d6 75%);background-size:4px 4px;background-position:0 0,2px 2px;border:1px solid #48494c;box-shadow:0 0 0 .5px #48494c"></div>
<div class="t" style="left:1489px;top:540.5px;color:#e8e8e8;font-size:9px;letter-spacing:-.15px">100 % 표준</div>
<div class="t" style="left:1489px;top:551.5px;color:#e8e8e8;font-size:9.700px;word-spacing:1px">레이어 2</div>
<div style="left:1438px;top:588.5px;width:149px;height:1px;background:#5d5e61"></div>
<svg style="left:1440px;top:572px" width="10" height="8" viewBox="0 0 10 8"><path d="M.5 4q4.500-4.500 9 0q-4.500 3.500-9 0z" fill="#eaeaea" stroke="#4a4a4c" stroke-width=".6"/><circle cx="5" cy="4" r="2.100" fill="#161616"/><circle cx="5.800" cy="3.300" r=".6" fill="#ddd"/></svg>
<div style="left:1471px;top:566px;width:16px;height:21px;background:#fff;background-image:linear-gradient(45deg,#d6d6d6 25%,transparent 25%,transparent 75%,#d6d6d6 75%),linear-gradient(45deg,#d6d6d6 25%,transparent 25%,transparent 75%,#d6d6d6 75%);background-size:4px 4px;background-position:0 0,2px 2px;border:1px solid #48494c;box-shadow:0 0 0 .5px #48494c"></div>
<div class="t" style="left:1489px;top:566px;color:#e8e8e8;font-size:9px;letter-spacing:-.15px">100 % 표준</div>
<div class="t" style="left:1489px;top:577px;color:#e8e8e8;font-size:9.700px;word-spacing:1px">레이어 1</div>
<div style="left:1467px;top:590.0px;width:120px;height:24.500px;background:linear-gradient(#7d9caf,#688799)"></div>
<div style="left:1438px;top:614.0px;width:149px;height:1px;background:#5d5e61"></div>
<svg style="left:1440px;top:597.5px" width="10" height="8" viewBox="0 0 10 8"><path d="M.5 4q4.500-4.500 9 0q-4.500 3.500-9 0z" fill="#eaeaea" stroke="#4a4a4c" stroke-width=".6"/><circle cx="5" cy="4" r="2.100" fill="#161616"/><circle cx="5.800" cy="3.300" r=".6" fill="#ddd"/></svg>
<div style="left:1471px;top:591.5px;width:16px;height:21px;background:#fff;background-image:linear-gradient(45deg,#d6d6d6 25%,transparent 25%,transparent 75%,#d6d6d6 75%),linear-gradient(45deg,#d6d6d6 25%,transparent 25%,transparent 75%,#d6d6d6 75%);background-size:4px 4px;background-position:0 0,2px 2px;border:1px solid #3d4a54;box-shadow:0 0 0 .5px #3d4a54"></div>
<div class="t" style="left:1489px;top:591.5px;color:#e8e8e8;font-size:9px;letter-spacing:-.15px">100 % 표준</div>
<div class="t" style="left:1489px;top:602.5px;color:#e8e8e8;font-size:9.700px;word-spacing:1px">레이어 3</div>
<div style="left:1438px;top:639.5px;width:149px;height:1px;background:#5d5e61"></div>
<svg style="left:1440px;top:623px" width="10" height="8" viewBox="0 0 10 8"><path d="M.5 4q4.500-4.500 9 0q-4.500 3.500-9 0z" fill="#eaeaea" stroke="#4a4a4c" stroke-width=".6"/><circle cx="5" cy="4" r="2.100" fill="#161616"/><circle cx="5.800" cy="3.300" r=".6" fill="#ddd"/></svg>
<div style="left:1471px;top:617px;width:16px;height:21px;background:#fff;border:1px solid #6a6b6f"></div>
<svg style="left:1490px;top:617px" width="16" height="16" viewBox="0 0 16 16"><rect x=".5" y=".5" width="15" height="15" fill="#e4e6e8" stroke="#77787c"/><path d="M4 2.500h6l3 3v8h-9z" fill="#fbfdff" stroke="#8a8c90" stroke-width=".7"/><path d="M10 2.500v3h3" fill="none" stroke="#8a8c90" stroke-width=".7"/></svg>
<div class="t" style="left:1507px;top:628px;color:#e8e8e8;font-size:10px">용지</div>
<div style="left:1452.500px;top:513px;width:1px;height:127px;background:#5d5e61"></div>
<div style="left:1466.500px;top:513px;width:1px;height:127px;background:#5d5e61"></div>
<svg style="left:1454px;top:596px" width="12" height="12" viewBox="0 0 12 12"><path d="M1 10.500l2-3.500 4-3.500 1.500 1.500-4 4z" fill="#e4e4e4" stroke="#444" stroke-width=".5"/><path d="M7.500 3.500l2-2 1.500 1.500-2 2z" fill="#1c1c1c"/></svg>
<!-- command bar, tabs, scrollbars, status -->
<div style="left:168px;top:57px;width:1235px;height:2px;background:linear-gradient(#6c6d70,#555)"></div>
<div style="left:168px;top:37px;width:2px;height:37px;background:#4e4e50"></div>
<div style="left:170px;top:40px;width:32px;height:15px;background:linear-gradient(#fdfdfd,#e6e6e6 60%,#cfcfcf);border-radius:1px;box-shadow:0 0 0 1px #8a8b8e"></div>
<svg style="left:178px;top:41px" width="17" height="13" viewBox="0 0 17 13"><path d="M8.500 1.200C4 1.200 1.500 4 1.500 6.800s2.500 4.800 6 4.800c4 0 7-2.200 7-5.200 0-2.300-2-3.600-4.500-3.600-2.800 0-4.600 1.500-4.600 3.300 0 1.300 1.100 2.100 2.600 2.100 1.700 0 3-.8 3-1.900" fill="none" stroke="#3a3a3c" stroke-width="1.500" stroke-linecap="round"/></svg>
<div style="left:206px;top:39px;width:1px;height:17px;background:#6f7074;box-shadow:1px 0 0 #838488"></div>
<div style="left:279px;top:39px;width:1px;height:17px;background:#6f7074;box-shadow:1px 0 0 #838488"></div>
<div style="left:323px;top:39px;width:1px;height:17px;background:#6f7074;box-shadow:1px 0 0 #838488"></div>
<div style="left:403px;top:39px;width:1px;height:17px;background:#6f7074;box-shadow:1px 0 0 #838488"></div>
<div style="left:465px;top:39px;width:1px;height:17px;background:#6f7074;box-shadow:1px 0 0 #838488"></div>
<div style="left:527px;top:39px;width:1px;height:17px;background:#6f7074;box-shadow:1px 0 0 #838488"></div>
<svg style="left:208px;top:38px" width="360" height="20" viewBox="0 0 360 20"><path d="M5.500 3.500h6l4 4v9.500h-10z" fill="#fbfbfb" stroke="#d0d0d0" stroke-width=".5"/><path d="M11.500 3.500v4h4" fill="#cfcfcf"/><path d="M3 4l2.500-2.500L8 4" fill="none" stroke="#3c3c3e" stroke-width="1.200"/><path d="M21.500 7h5l1.500 1.500h7v8.500h-13.500z" fill="#e9e9e9"/><path d="M22 17l2.500-7h11.500l-2.500 7z" fill="#fafafa"/><path d="M29 4q3-3 6 0l-1 2" fill="none" stroke="#3c3c3e" stroke-width="1.300"/><rect x="42" y="3.500" width="11" height="10.500" fill="#a3a4a7"/><rect x="42" y="14.500" width="11" height="2" fill="#8d8e92"/><path d="M57.500 9h6.500l-3.250 4z" fill="#3c3c3e"/><path d="M80 5.500h7a3.800 3.800 0 0 1 0 7.600h-4" fill="none" stroke="#606165" stroke-width="2"/><path d="M76 9.500l5-3.500v7z" fill="#606165" transform="translate(0 3.500)"/><path d="M104 5.500h-6a3.800 3.800 0 0 0 0 7.600h4" fill="none" stroke="#606165" stroke-width="2"/><path d="M109.500 5.500l-5-3.500v7z" fill="#606165"/><g fill="#2e2e30"><circle cx="127" cy="4" r="1.300"/><circle cx="131.500" cy="6" r="1.300"/><circle cx="132.500" cy="10.500" r="1.300"/><circle cx="127.500" cy="14" r="1.500"/><circle cx="122.500" cy="10.500" r="1.300"/><circle cx="122" cy="6.500" r="1.300"/></g><rect x="141.500" y="5" width="9" height="10" fill="#98999d"/><path d="M139 7v6M153 7v6M143 3h6M143 17h6" stroke="#909195" stroke-width="1.600"/><path d="M163 6l8 4.500-5 6.500-7-4.500z" fill="#fbfbfb"/><path d="M158 12l6-7" stroke="#2e2e30" stroke-width="1.600"/><path d="M165 2.500l3.500 2.500" stroke="#e4e4e4" stroke-width="2.200" stroke-linecap="round"/><circle cx="183.500" cy="10" r="4.200" fill="none" stroke="#2e2e30" stroke-width="2"/><path d="M180.500 7l-3.500-3.500M186.500 7l3.500-3.500M180.500 13l-3.500 3.500M186.500 13l3.500 3.500" stroke="#2e2e30" stroke-width="2"/><g fill="#2e2e30"><circle cx="177" cy="3.500" r="1.400"/><circle cx="190" cy="3.500" r="1.400"/><circle cx="177" cy="16.500" r="1.400"/><circle cx="190" cy="16.500" r="1.400"/></g><rect x="201" y="5" width="11" height="11" fill="#74757a" stroke="#6a6b6f" stroke-dasharray="1.500 1"/><path d="M201 16l11-11" stroke="#636468" stroke-width="1.300"/><rect x="220" y="5" width="12" height="11" fill="#77787c"/><path d="M220 16h12v-11z" fill="#696a6e"/><rect x="239.500" y="4.500" width="12" height="12" fill="#8e8f93" stroke="#6a6b6f" stroke-width="1.600" stroke-dasharray="1.600 1.400"/><rect x="262" y="1" width="36" height="19" fill="#6d6e72"/><path d="M265 8v9h10z" fill="none" stroke="#2a3a48" stroke-width="1.400"/><path d="M264.500 17.500h10" stroke="#1ea5e8" stroke-width="1.400"/><path d="M275.500 3v12" stroke="#f4f4f4" stroke-width="1.800"/><path d="M274 14l1.500 3 1.500-3z" fill="#222"/><path d="M283 15q1-5 6-6h4v6.500z" fill="none" stroke="#1d2c38" stroke-width="1.400"/><path d="M294.500 3v11" stroke="#f4f4f4" stroke-width="1.800"/><path d="M293 14l1.500 3 1.500-3z" fill="#1ea5e8"/><path d="M304 7.500h12M304 14h12M306.500 5v12M313.500 5v12" stroke="#1ea5e8" stroke-width="1.300"/><path d="M310 2.500v11" stroke="#f4f4f4" stroke-width="2.400"/><path d="M308.500 4v8M311.500 4v8" stroke="#333" stroke-width=".8"/><path d="M308.800 12.500l1.200 2.500 1.200-2.500z" fill="#222"/></svg>
<div style="left:532px;top:41px;width:31px;height:14px;background:linear-gradient(#fdfdfd,#e8e8e8 60%,#cfcfcf);border-radius:1px;box-shadow:0 0 0 1px #8a8b8e"></div>
<svg style="left:541px;top:41px" width="14" height="14" viewBox="0 0 14 14"><circle cx="7" cy="6.300" r="5.800" fill="#333335"/><path d="M5 10.500l-.5 3 3-2z" fill="#333335"/><text x="7" y="10" text-anchor="middle" font-family="Liberation Sans,sans-serif" font-weight="bold" font-size="10" fill="#fff">?</text></svg>
<div style="left:170px;top:59px;width:76.500px;height:15px;background:linear-gradient(#737478,#6c6d71);box-shadow:0 0 0 .5px #5f6063"></div>
<div class="t" style="left:174px;top:60px;color:#a4a5a9;font-size:9.500px;transform:scaleX(.92);transform-origin:0 0">일러스트9*</div>
<svg style="left:236px;top:63px" width="7" height="7"><path d="M1 1l5 5M6 1l-5 5" stroke="#58595c" stroke-width="1.700"/></svg>
<div style="left:248px;top:59px;width:76.500px;height:15px;background:linear-gradient(#737478,#6c6d71);box-shadow:0 0 0 .5px #5f6063"></div>
<div class="t" style="left:252px;top:60px;color:#a4a5a9;font-size:9.500px;transform:scaleX(.92);transform-origin:0 0">카일*</div>
<svg style="left:314px;top:63px" width="7" height="7"><path d="M1 1l5 5M6 1l-5 5" stroke="#58595c" stroke-width="1.700"/></svg>
<div style="left:326px;top:59px;width:76.500px;height:15px;background:linear-gradient(#737478,#6c6d71);box-shadow:0 0 0 .5px #5f6063"></div>
<div class="t" style="left:330px;top:60px;color:#a4a5a9;font-size:9.500px;transform:scaleX(.92);transform-origin:0 0">그레이브즈</div>
<svg style="left:392px;top:63px" width="7" height="7"><path d="M1 1l5 5M6 1l-5 5" stroke="#58595c" stroke-width="1.700"/></svg>
<div style="left:404px;top:59px;width:76.500px;height:15px;background:linear-gradient(#737478,#6c6d71);box-shadow:0 0 0 .5px #5f6063"></div>
<div class="t" style="left:408px;top:60px;color:#a4a5a9;font-size:9.500px;transform:scaleX(.92);transform-origin:0 0">네즈코</div>
<svg style="left:470px;top:63px" width="7" height="7"><path d="M1 1l5 5M6 1l-5 5" stroke="#58595c" stroke-width="1.700"/></svg>
<div style="left:482px;top:59px;width:76.500px;height:15px;background:linear-gradient(#737478,#6c6d71);box-shadow:0 0 0 .5px #5f6063"></div>
<div class="t" style="left:486px;top:60px;color:#a4a5a9;font-size:9.500px;transform:scaleX(.92);transform-origin:0 0">노무섭</div>
<svg style="left:548px;top:63px" width="7" height="7"><path d="M1 1l5 5M6 1l-5 5" stroke="#58595c" stroke-width="1.700"/></svg>
<div style="left:560px;top:59px;width:76.500px;height:15px;background:linear-gradient(#737478,#6c6d71);box-shadow:0 0 0 .5px #5f6063"></div>
<div class="t" style="left:564px;top:60px;color:#a4a5a9;font-size:9.500px;transform:scaleX(.92);transform-origin:0 0">아크</div>
<svg style="left:626px;top:63px" width="7" height="7"><path d="M1 1l5 5M6 1l-5 5" stroke="#58595c" stroke-width="1.700"/></svg>
<div style="left:638px;top:59px;width:76.500px;height:15px;background:linear-gradient(#737478,#6c6d71);box-shadow:0 0 0 .5px #5f6063"></div>
<div class="t" style="left:642px;top:60px;color:#a4a5a9;font-size:9.500px;transform:scaleX(.92);transform-origin:0 0">릴</div>
<svg style="left:704px;top:63px" width="7" height="7"><path d="M1 1l5 5M6 1l-5 5" stroke="#58595c" stroke-width="1.700"/></svg>
<div style="left:716px;top:59px;width:76.500px;height:15px;background:linear-gradient(#737478,#6c6d71);box-shadow:0 0 0 .5px #5f6063"></div>
<div class="t" style="left:720px;top:60px;color:#a4a5a9;font-size:9.500px;transform:scaleX(.92);transform-origin:0 0">이즈</div>
<svg style="left:782px;top:63px" width="7" height="7"><path d="M1 1l5 5M6 1l-5 5" stroke="#58595c" stroke-width="1.700"/></svg>
<div style="left:794px;top:59px;width:76.500px;height:15px;background:linear-gradient(#737478,#6c6d71);box-shadow:0 0 0 .5px #5f6063"></div>
<div class="t" style="left:798px;top:60px;color:#a4a5a9;font-size:9.500px;transform:scaleX(.92);transform-origin:0 0">록새로이</div>
<svg style="left:860px;top:63px" width="7" height="7"><path d="M1 1l5 5M6 1l-5 5" stroke="#58595c" stroke-width="1.700"/></svg>
<div style="left:872px;top:59px;width:76.500px;height:15px;background:linear-gradient(#97989c,#85868a);box-shadow:0 0 0 .5px #5f6063"></div>
<div class="t" style="left:876px;top:60px;color:#f2f2f2;font-size:9.500px;transform:scaleX(.92);transform-origin:0 0">에코</div>
<svg style="left:938px;top:63px" width="7" height="7"><path d="M1 1l5 5M6 1l-5 5" stroke="#2c2c2e" stroke-width="1.700"/></svg>
<div style="left:950px;top:59px;width:76.500px;height:15px;background:linear-gradient(#737478,#6c6d71);box-shadow:0 0 0 .5px #5f6063"></div>
<div class="t" style="left:954px;top:60px;color:#a4a5a9;font-size:9.500px;transform:scaleX(.92);transform-origin:0 0">파이크</div>
<svg style="left:1016px;top:63px" width="7" height="7"><path d="M1 1l5 5M6 1l-5 5" stroke="#58595c" stroke-width="1.700"/></svg>
<div style="left:1392.500px;top:59px;width:8.500px;height:15px;background:linear-gradient(#838488,#707175);box-shadow:0 0 0 .5px #58595c"></div>
<svg style="left:1395px;top:64px" width="6" height="5"><path d="M.5 .5h5l-2.500 3.500z" fill="#444"/></svg>
<div style="left:168px;top:73.500px;width:1235px;height:1px;background:#505052"></div>
<div style="left:1392px;top:75px;width:9px;height:751px;background:linear-gradient(90deg,#68696d,#707175 30%,#727377 80%,#68696c)"></div>
<div style="left:1401px;top:58px;width:2.500px;height:779px;background:#4e4e50"></div>
<div style="left:1392.500px;top:75px;width:8.500px;height:10px;background:linear-gradient(#838488,#76777b)"></div>
<div style="left:1392.500px;top:816.500px;width:8.500px;height:9.500px;background:linear-gradient(#838488,#76777b)"></div>
<div style="left:1392.500px;top:289px;width:8.500px;height:128px;background:linear-gradient(90deg,#7c7d81,#86878b);border-radius:1px"></div>
<svg style="left:1392.500px;top:75px" width="9" height="752"><path d="M2.500 6h4l-2-2.500zM2.500 745h4l-2 2.500z" fill="#48494c"/><path d="M2.500 276h4M2.500 278h4M2.500 280h4" stroke="#67686c" stroke-width=".8"/></svg>
<div style="left:181px;top:826px;width:1220px;height:10.500px;background:#77787c"></div>
<div style="left:181px;top:826px;width:1221px;height:1px;background:#5d5e61"></div>
<div style="left:181px;top:827px;width:79px;height:9.300px;background:#7a7b80;border:1px solid #5e5f62"></div>
<svg style="left:181px;top:827px" width="79" height="10" viewBox="0 0 79 10"><path d="M1 9L78 1V9Z" fill="#4a4a4c"/></svg>
<div style="left:226px;top:826px;width:2px;height:10.500px;background:#77787c;box-shadow:0 0 0 .5px #5a5b5e"></div>
<div class="t" style="left:183.5px;top:825.500px;font-size:9.600px;color:#e2e2e2;letter-spacing:-.1px">100.0</div>
<div style="left:307px;top:827px;width:77px;height:9.300px;background:#7a7b80;border:1px solid #5e5f62"></div>
<svg style="left:307px;top:827px" width="77" height="10" viewBox="0 0 77 10"><path d="M39 9.500V6.500C45 1.500 51 0 57 3S71 8 76.500 9.500Z" fill="#464648"/><path d="M28 9.500L38 6.300V9.500Z" fill="#464648"/><path d="M.5 .5V9.500H4.500Z" fill="#464648"/></svg>
<div style="left:345px;top:826px;width:2px;height:10.500px;background:#77787c;box-shadow:0 0 0 .5px #5a5b5e"></div>
<div class="t" style="left:309.5px;top:825.500px;font-size:9.600px;color:#e2e2e2;letter-spacing:-.1px">0.0</div>
<svg style="left:260px;top:826px" width="180" height="11" viewBox="0 0 180 11"><circle cx="7" cy="4.500" r="2.800" fill="#e8e8e8"/><path d="M5.500 4.500h3" stroke="#333" stroke-width=".9"/><path d="M9 6.500l2 2.500" stroke="#333" stroke-width="1.200"/><circle cx="22.500" cy="4.500" r="2.800" fill="#e8e8e8"/><path d="M21 4.500h3M22.500 3v3" stroke="#333" stroke-width=".9"/><path d="M24.500 6.500l2 2.500" stroke="#333" stroke-width="1.200"/><rect x="33.500" y="1" width="9.500" height="9.500" fill="#1d1d1d"/><rect x="35.500" y="3" width="5.500" height="5.500" fill="#2f2f2f" stroke="#666" stroke-width=".6"/><path d="M129 8a3.500 3.500 0 0 1 7 0" fill="none" stroke="#242426" stroke-width="1.700"/><path d="M127 7h4l-2 3z" fill="#242426"/><path d="M143.500 8a3.500 3.500 0 0 1 7 0" fill="none" stroke="#242426" stroke-width="1.700"/><path d="M148.500 7h4l-2 3z" fill="#242426"/><circle cx="163" cy="6" r="3.800" fill="none" stroke="#5b5c60" stroke-width="1.300" stroke-dasharray="1.800 1.500"/><rect x="172.500" y="1" width="6" height="9.500" fill="#838488"/><path d="M177 3.500v4.500l-3-2.250z" fill="#444"/></svg>
<div style="left:440px;top:827px;width:942px;height:9.300px;background:linear-gradient(#6b6c70,#707175 70%,#85868a)"></div>
<div style="left:759px;top:827px;width:308px;height:8.500px;background:linear-gradient(#7c7d81,#86878b);border-radius:1px"></div>
<svg style="left:909px;top:828px" width="8" height="8"><path d="M2 2v4M4 2v4M6 2v4" stroke="#66676b" stroke-width=".8"/></svg>
<div style="left:1382px;top:827px;width:9px;height:9.300px;background:linear-gradient(#858689,#76777b)"></div>
<svg style="left:1384px;top:829px" width="6" height="7"><path d="M1 .5v6l4-3z" fill="#444"/></svg>
<div style="left:1392px;top:826px;width:9px;height:10.500px;background:#7b7c80"></div>
<div style="left:181px;top:836.300px;width:1222px;height:1.200px;background:#4e4e50"></div>
<div style="left:170px;top:838px;width:13px;height:30px;background:#5f5f61;border-right:1px solid #505052"></div>
<svg style="left:172px;top:840px" width="10" height="26"><path d="M1.500 6l3.500-3 3.500 3" fill="none" stroke="#85868a" stroke-width="1.400"/><path d="M1.500 16l3.500 3 3.500-3M1.500 20l3.500 3 3.500-3" fill="none" stroke="#85868a" stroke-width="1.400"/></svg>
<div style="left:188px;top:839px;width:29px;height:27px;background:linear-gradient(#7b7c80,#6f7074);border:1px solid #636467"></div>
<svg style="left:194px;top:846px" width="18" height="12" viewBox="0 0 18 12"><rect x=".5" y=".5" width="17" height="11" fill="#c9c9cb"/><path d="M3 1v10M6 1v10M9 1v10" stroke="#f6f6f6" stroke-width="1.600"/><rect x="11.500" y="1" width="6" height="10" fill="#a9aaad"/><circle cx="14" cy="3.500" r="1" fill="#3450a8"/><circle cx="14" cy="8.500" r="1" fill="#3450a8"/></svg>
<!-- canvas artwork (vector strokes) -->
<svg style="left:0;top:0" width="1600" height="900" viewBox="0 0 1600 900"><defs><filter id="d1" x="-20%" y="-20%" width="140%" height="140%"><feGaussianBlur stdDeviation="1"/></filter><filter id="d2" x="-30%" y="-30%" width="160%" height="160%"><feGaussianBlur stdDeviation="2.500"/></filter><filter id="d3" x="-5%" y="-5%" width="110%" height="110%"><feTurbulence type="fractalNoise" baseFrequency=".9" numOctaves="2" seed="3" result="n"/><feDisplacementMap in="SourceGraphic" in2="n" scale="1.6" xChannelSelector="R" yChannelSelector="G" result="dd"/><feGaussianBlur in="dd" stdDeviation=".5"/></filter><linearGradient id="fc" x1="0" x2="1" y1="0" y2="0"><stop offset="0" stop-color="#9a9a9a"/><stop offset=".22" stop-color="#8e8e8e"/><stop offset=".42" stop-color="#b2b2b2"/><stop offset=".7" stop-color="#aaaaaa"/><stop offset="1" stop-color="#b4b4b4"/></linearGradient><clipPath id="fclip"><path d="M696.5 335.0 L720.0 342.0 L747.5 350.5 L753.0 349.5 L760.0 348.5 L790.0 341.0 L816.0 334.5 L817.0 352.0 L819.0 380.0 L823.0 396.0 L822.5 427.0 L821.0 455.0 L800.0 476.0 L772.5 504.0 L760.0 506.5 L750.0 505.5 L722.0 482.0 L699.0 461.0 L696.0 440.0 L693.8 415.0 L693.5 390.0 L695.0 365.0 L695.6 350.0Z"/></clipPath></defs>
<g filter="url(#d3)"><path d="M756.0 228.0 L764.0 228.0 L766.0 250.0 L768.0 282.0 L770.0 330.0 L758.0 345.0 L754.0 300.0 L754.0 260.0Z" fill="#c6c6c6" opacity="1" filter="url(#d1)"/><path d="M770.0 255.0 L782.0 250.0 L783.0 282.0 L780.0 320.0 L772.0 340.0 L764.0 345.0 L768.0 300.0Z" fill="#cccccc" opacity="1" filter="url(#d1)"/><path d="M721.0 205.0 L724.0 225.0 L730.0 260.0 L734.0 282.0 L730.0 285.0 L725.0 262.0 L721.0 235.0Z" fill="#bdbdbd" opacity="0.8" filter="url(#d1)"/><path d="M690.0 308.0 L700.0 303.0 L714.0 312.0 L722.0 334.0 L702.0 335.0 L692.0 330.0Z" fill="#c8c8c8" opacity="0.85" filter="url(#d2)"/><path d="M797.0 294.0 L810.0 298.0 L824.0 313.0 L828.0 333.0 L812.0 335.0 L794.0 339.0 L792.0 318.0Z" fill="#c8c8c8" opacity="0.85" filter="url(#d2)"/><path d="M686.0 350.0 L696.0 345.0 L696.0 400.0 L690.0 395.0 L686.0 375.0Z" fill="#c9c9c9" opacity="0.9" filter="url(#d2)"/><path d="M720.0 318.0 L750.0 320.0 L790.0 318.0 L790.0 345.0 L753.0 352.0 L722.0 345.0Z" fill="#cfcfcf" opacity="0.9" filter="url(#d2)"/><path d="M693.0 404.0 C691.5 403.3 687.0 399.7 684.0 400.0 C681.0 400.3 677.2 402.7 675.0 406.0 C672.8 409.3 671.2 415.0 671.0 420.0 C670.8 425.0 672.2 431.5 674.0 436.0 C675.8 440.5 679.0 444.3 682.0 447.0 C685.0 449.7 689.7 452.2 692.0 452.0 C694.3 451.8 695.8 454.0 696.0 446.0 C696.2 438.0 693.5 411.0 693.0 404.0Z" fill="#e2e2e2" opacity="1"/><path d="M693.0 408.0 C691.8 408.7 687.7 409.3 686.0 412.0 C684.3 414.7 683.0 419.7 683.0 424.0 C683.0 428.3 684.3 434.0 686.0 438.0 C687.7 442.0 691.3 447.7 693.0 448.0 C694.7 448.3 696.0 446.7 696.0 440.0 C696.0 433.3 693.5 413.3 693.0 408.0Z" fill="#9c9c9c" opacity="0.9" filter="url(#d1)"/><path d="M824.0 404.0 C826.0 403.3 832.3 399.7 836.0 400.0 C839.7 400.3 843.7 402.7 846.0 406.0 C848.3 409.3 850.0 415.0 850.0 420.0 C850.0 425.0 848.0 432.0 846.0 436.0 C844.0 440.0 841.0 442.2 838.0 444.0 C835.0 445.8 830.7 447.7 828.0 447.0 C825.3 446.3 822.7 447.2 822.0 440.0 C821.3 432.8 823.7 410.0 824.0 404.0Z" fill="#ececec" opacity="1"/><path d="M824.0 410.0 C825.3 409.7 830.0 406.3 832.0 408.0 C834.0 409.7 836.0 415.3 836.0 420.0 C836.0 424.7 833.7 432.0 832.0 436.0 C830.3 440.0 827.7 444.0 826.0 444.0 C824.3 444.0 822.3 441.7 822.0 436.0 C821.7 430.3 823.7 414.3 824.0 410.0Z" fill="#ababab" opacity="0.85" filter="url(#d1)"/><path d="M696.5 335.0 L720.0 342.0 L747.5 350.5 L753.0 349.5 L760.0 348.5 L790.0 341.0 L816.0 334.5 L817.0 352.0 L819.0 380.0 L823.0 396.0 L822.5 427.0 L821.0 455.0 L800.0 476.0 L772.5 504.0 L760.0 506.5 L750.0 505.5 L722.0 482.0 L699.0 461.0 L696.0 440.0 L693.8 415.0 L693.5 390.0 L695.0 365.0 L695.6 350.0Z" fill="url(#fc)"/><g clip-path="url(#fclip)"><path d="M697.0 345.0 L720.0 350.0 L722.0 378.0 L712.0 395.0 L697.0 392.0Z" fill="#8a8a8a" opacity="0.8" filter="url(#d2)"/><path d="M700.0 430.0 L720.0 440.0 L745.0 470.0 L750.0 505.0 L720.0 482.0 L700.0 462.0Z" fill="#8c8c8c" opacity="0.75" filter="url(#d2)"/><path d="M740.0 445.0 L790.0 445.0 L800.0 470.0 L770.0 500.0 L755.0 500.0 L748.0 470.0Z" fill="#bcbcbc" opacity="0.7" filter="url(#d2)"/><path d="M770.0 350.0 L815.0 338.0 L817.0 365.0 L790.0 372.0 L770.0 366.0Z" fill="#b8b8b8" opacity="0.7" filter="url(#d2)"/><path d="M797.0 436.0 L822.0 430.0 L821.0 455.0 L805.0 468.0Z" fill="#b8b8b8" opacity="0.6" filter="url(#d2)"/></g><path d="M722.5 367.5 L787.5 367.5 L788.0 371.0 L761.0 405.0 L785.0 434.0 L788.5 441.0 L730.0 441.0 L732.0 436.0 L752.5 407.5 L722.5 371.0Z" fill="#ffffff" opacity="1"/><path d="M704.5 413.0 C705.6 412.3 708.9 409.8 711.0 409.0 C713.1 408.2 713.8 408.0 717.0 408.0 C720.2 408.0 726.5 408.2 730.0 409.0 C733.5 409.8 736.3 411.3 738.0 413.0 C739.7 414.7 740.0 416.7 740.0 419.0 C740.0 421.3 739.3 424.7 738.0 427.0 C736.7 429.3 734.8 431.8 732.0 433.0 C729.2 434.2 724.5 435.0 721.0 434.5 C717.5 434.0 713.6 432.1 711.0 430.0 C708.4 427.9 706.6 424.8 705.5 422.0 C704.4 419.2 704.7 414.5 704.5 413.0Z" fill="#ffffff" opacity="1"/><path d="M775.5 414.0 C776.6 413.2 779.2 410.5 782.0 409.5 C784.8 408.5 787.7 407.8 792.0 408.0 C796.3 408.2 804.2 409.0 808.0 410.5 C811.8 412.0 813.7 414.2 814.5 417.0 C815.3 419.8 814.8 424.3 813.0 427.0 C811.2 429.7 807.7 431.8 804.0 433.0 C800.3 434.2 794.8 434.8 791.0 434.5 C787.2 434.2 783.5 432.9 781.0 431.0 C778.5 429.1 776.9 425.8 776.0 423.0 C775.1 420.2 775.6 415.5 775.5 414.0Z" fill="#ffffff" opacity="1"/><path d="M737.0 430.0 C739.2 429.6 745.3 427.9 750.0 427.5 C754.7 427.1 760.7 427.1 765.0 427.5 C769.3 427.9 774.2 429.6 776.0 430.0" fill="none" stroke="#9c9c9c" stroke-width="2.6" stroke-linecap="round" stroke-linejoin="round" opacity="0.9"/><path d="M733.0 434.5 C735.5 434.2 742.5 432.9 748.0 432.5 C753.5 432.1 760.7 431.8 766.0 432.0 C771.3 432.2 777.7 433.7 780.0 434.0" fill="none" stroke="#b4b4b4" stroke-width="1.6" stroke-linecap="round" stroke-linejoin="round" opacity="0.8"/><path d="M740.0 464.5 C743.3 464.9 752.7 467.1 760.0 467.0 C767.3 466.9 780.7 463.2 784.0 464.0 C787.3 464.8 782.7 469.8 780.0 472.0 C777.3 474.2 772.3 476.2 768.0 477.0 C763.7 477.8 757.8 478.0 754.0 477.0 C750.2 476.0 747.3 473.1 745.0 471.0 C742.7 468.9 740.8 465.6 740.0 464.5Z" fill="#ffffff" opacity="1"/><path d="M744.0 470.0 C746.7 470.2 754.3 471.6 760.0 471.5 C765.7 471.4 775.0 469.8 778.0 469.5" fill="none" stroke="#8e8e8e" stroke-width="1.5" stroke-linecap="round" stroke-linejoin="round" opacity="0.9"/><path d="M716.0 409.0 C717.0 408.8 719.5 407.9 722.0 408.0 C724.5 408.1 728.3 408.7 731.0 409.5 C733.7 410.3 736.7 411.4 738.0 413.0 C739.3 414.6 739.5 417.2 739.0 419.0 C738.5 420.8 737.0 422.8 735.0 424.0 C733.0 425.2 729.3 426.3 727.0 426.5 C724.7 426.7 722.6 426.0 721.0 425.0 C719.4 424.0 718.3 423.2 717.5 420.5 C716.7 417.8 716.2 410.9 716.0 409.0Z" fill="#262626" opacity="1"/><path d="M720.5 416.0 C721.6 415.8 724.8 414.9 727.0 415.0 C729.2 415.1 732.2 415.7 734.0 416.5 C735.8 417.3 737.7 418.7 737.5 420.0 C737.3 421.3 734.9 423.5 733.0 424.5 C731.1 425.5 727.9 426.1 726.0 425.8 C724.1 425.6 722.4 424.6 721.5 423.0 C720.6 421.4 720.7 417.2 720.5 416.0Z" fill="#8e8e8e" opacity="1"/><path d="M727.0 411.0 C728.0 411.2 731.8 411.5 733.0 412.5 C734.2 413.5 734.7 415.8 734.0 417.0 C733.3 418.2 730.3 419.7 729.0 419.5 C727.7 419.3 726.3 417.4 726.0 416.0 C725.7 414.6 726.8 411.8 727.0 411.0Z" fill="#0f0f0f" opacity="1"/><circle cx="722.300" cy="411.200" r="3.200" fill="#c8c8c8"/><ellipse cx="732.500" cy="421" rx="1.800" ry="1.300" fill="#e4e4e4"/><ellipse cx="736.800" cy="421.200" rx="1.200" ry="1" fill="#ededed"/><path d="M716.2 409.0 C716.2 410.2 715.9 413.9 716.3 416.0 C716.7 418.1 717.5 419.9 718.5 421.5 C719.5 423.1 720.8 424.7 722.0 425.5 C723.2 426.3 725.3 426.3 726.0 426.5" fill="none" stroke="#161616" stroke-width="2.5" stroke-linecap="round" stroke-linejoin="round" opacity="1"/><path d="M781.5 409.5 C782.9 409.3 786.4 408.2 790.0 408.3 C793.6 408.4 800.9 408.4 803.0 410.0 C805.1 411.6 803.0 415.7 802.5 418.0 C802.0 420.3 801.1 422.4 800.0 424.0 C798.9 425.6 798.0 427.0 796.0 427.5 C794.0 428.0 790.2 428.0 788.0 427.0 C785.8 426.0 784.1 424.4 783.0 421.5 C781.9 418.6 781.8 411.5 781.5 409.5Z" fill="#989898" opacity="1"/><path d="M789.5 408.5 C790.4 408.5 793.9 406.9 794.7 408.7 C795.5 410.4 795.3 417.2 794.5 419.0 C793.7 420.8 790.8 421.2 790.0 419.5 C789.2 417.8 789.6 410.3 789.5 408.5Z" fill="#121212" opacity="1"/><path d="M785.5 419.5 C787.8 419.5 797.1 418.3 799.0 419.5 C800.9 420.7 798.8 425.3 797.0 426.5 C795.2 427.7 790.4 427.7 788.5 426.5 C786.6 425.3 786.0 420.7 785.5 419.5Z" fill="#ececec" opacity="0.9"/><path d="M795.5 411.0 C796.4 411.1 800.2 410.5 801.0 411.5 C801.8 412.5 801.3 416.0 800.5 417.0 C799.7 418.0 796.8 418.5 796.0 417.5 C795.2 416.5 795.6 412.1 795.5 411.0Z" fill="#c9c9c9" opacity="0.8"/><ellipse cx="786.100" cy="411.600" rx="3.100" ry="3.500" fill="#ffffff"/><path d="M781.0 410.0 C781.0 410.8 781.1 413.3 781.3 415.0 C781.5 416.7 781.6 418.6 782.0 420.0 C782.4 421.4 782.9 422.5 783.5 423.5 C784.1 424.5 785.2 425.6 785.5 426.0" fill="none" stroke="#161616" stroke-width="2.5" stroke-linecap="round" stroke-linejoin="round" opacity="1"/><path d="M803.0 410.0 C802.9 411.3 803.0 415.7 802.5 418.0 C802.0 420.3 800.9 422.4 800.0 424.0 C799.1 425.6 797.5 426.9 797.0 427.5" fill="none" stroke="#5a5a5a" stroke-width="1.4" stroke-linecap="round" stroke-linejoin="round" opacity="1"/><path d="M695.5 409.3 C696.2 409.0 698.7 408.3 700.0 407.5 C701.3 406.7 702.2 405.4 703.5 404.5 C704.8 403.6 705.9 402.6 707.5 402.0 C709.1 401.4 710.9 401.0 713.0 400.8 C715.1 400.6 717.8 400.6 720.0 400.8 C722.2 401.0 723.9 401.3 726.0 402.0 C728.1 402.7 730.6 403.9 732.5 405.0 C734.4 406.1 736.2 407.2 737.5 408.5 C738.8 409.8 740.0 410.9 740.5 412.5 C741.0 414.1 740.8 416.8 740.5 418.0 C740.2 419.2 739.6 420.2 739.0 420.0 C738.4 419.8 737.7 418.0 737.0 417.0 C736.3 416.0 736.0 415.1 735.0 414.0 C734.0 412.9 732.8 411.4 731.0 410.5 C729.2 409.6 726.5 408.9 724.0 408.6 C721.5 408.3 718.2 408.5 716.0 408.5 C713.8 408.5 712.5 408.1 711.0 408.5 C709.5 408.9 708.0 409.9 707.0 411.0 C706.0 412.1 705.5 413.7 705.0 415.0 C704.5 416.3 704.8 419.2 704.0 419.0 C703.2 418.8 701.3 414.8 700.0 413.5 C698.7 412.2 696.8 411.7 696.0 411.0 C695.2 410.3 695.6 409.6 695.5 409.3Z" fill="#0d0d0d" opacity="1"/><path d="M772.5 420.0 C772.8 418.8 773.2 414.7 774.0 412.5 C774.8 410.3 775.7 408.7 777.5 407.0 C779.3 405.3 782.2 403.6 785.0 402.5 C787.8 401.4 791.1 400.6 794.0 400.3 C796.9 400.0 799.8 400.4 802.5 400.8 C805.2 401.2 807.5 401.6 810.0 402.5 C812.5 403.4 815.5 405.0 817.5 406.0 C819.5 407.0 821.5 407.6 821.8 408.3 C822.1 409.0 820.2 409.5 819.5 410.0 C818.8 410.5 818.0 410.5 817.5 411.5 C817.0 412.5 817.1 414.8 816.5 416.0 C815.9 417.2 814.6 418.8 814.0 418.5 C813.4 418.2 813.8 415.2 813.0 414.0 C812.2 412.8 810.5 411.8 809.0 411.0 C807.5 410.2 806.0 409.9 804.0 409.5 C802.0 409.1 799.3 408.8 797.0 408.6 C794.7 408.4 792.3 408.4 790.0 408.5 C787.7 408.6 784.5 409.1 783.0 409.5 C781.5 409.9 781.8 410.3 781.0 411.0 C780.2 411.7 779.2 412.3 778.5 413.5 C777.8 414.7 777.1 416.8 776.5 418.0 C775.9 419.2 775.7 420.7 775.0 421.0 C774.3 421.3 772.9 420.2 772.5 420.0Z" fill="#0d0d0d" opacity="1"/><path d="M730.0 399.5 C731.0 399.8 734.1 400.6 736.0 401.5 C737.9 402.4 740.6 404.4 741.5 405.0" fill="none" stroke="#3a3a3a" stroke-width="1.8" stroke-linecap="round" stroke-linejoin="round" opacity="1"/><path d="M731.0 391.0 C731.4 391.6 732.8 393.3 733.5 394.5 C734.2 395.7 734.8 397.4 735.0 398.0" fill="none" stroke="#444" stroke-width="1.6" stroke-linecap="round" stroke-linejoin="round" opacity="1"/><path d="M771.5 404.5 C772.2 403.8 774.4 401.6 776.0 400.5 C777.6 399.4 780.2 398.4 781.0 398.0" fill="none" stroke="#555" stroke-width="1.8" stroke-linecap="round" stroke-linejoin="round" opacity="1"/><path d="M764.0 401.0 C764.5 400.2 766.0 397.4 767.0 396.0 C768.0 394.6 769.5 393.1 770.0 392.5" fill="none" stroke="#555" stroke-width="1.6" stroke-linecap="round" stroke-linejoin="round" opacity="1"/><path d="M705.0 419.0 C706.7 419.2 710.8 419.9 715.0 420.5 C719.2 421.1 727.5 422.2 730.0 422.5" fill="none" stroke="#9a9a9a" stroke-width="1.0" stroke-linecap="round" stroke-linejoin="round" opacity="0.9"/><path d="M706.0 421.0 C706.7 422.2 708.3 426.1 710.0 428.0 C711.7 429.9 715.0 431.8 716.0 432.5" fill="none" stroke="#555" stroke-width="1.3" stroke-linecap="round" stroke-linejoin="round" opacity="1"/><path d="M776.0 424.0 C776.6 424.8 778.3 427.6 779.5 429.0 C780.7 430.4 781.2 431.6 783.0 432.5 C784.8 433.4 786.7 434.3 790.0 434.5 C793.3 434.7 799.7 434.1 803.0 433.5 C806.3 432.9 808.0 431.9 810.0 431.0 C812.0 430.1 814.2 428.5 815.0 428.0" fill="none" stroke="#333" stroke-width="1.7" stroke-linecap="round" stroke-linejoin="round" opacity="1"/><path d="M710.0 288.0 C707.9 289.0 701.2 291.2 697.5 293.8 C693.8 296.4 690.6 300.1 687.5 303.8 C684.4 307.6 681.3 311.9 678.8 316.3 C676.3 320.7 674.2 325.6 672.5 330.0 C670.8 334.4 669.6 338.3 668.8 342.5 C668.0 346.7 667.4 350.8 667.5 355.0 C667.6 359.2 669.1 365.4 669.4 367.5" fill="none" stroke="#262626" stroke-width="3.38" stroke-linecap="round" stroke-linejoin="round" opacity="1"/><path d="M801.3 282.5 C803.1 283.7 808.5 286.8 812.0 289.5 C815.5 292.2 818.7 295.2 822.5 298.8 C826.3 302.4 831.5 306.5 835.0 311.3 C838.5 316.1 841.5 321.9 843.8 327.5 C846.1 333.1 847.8 339.4 848.8 345.0 C849.8 350.6 850.0 356.5 850.0 361.3 C850.0 366.1 849.0 371.7 848.8 373.8" fill="none" stroke="#262626" stroke-width="3.64" stroke-linecap="round" stroke-linejoin="round" opacity="1"/><path d="M693.8 352.0 C692.2 353.2 687.0 356.3 684.0 359.0 C681.0 361.7 678.3 365.2 676.0 368.0 C673.7 370.8 671.0 374.7 670.0 376.0" fill="none" stroke="#2b2b2b" stroke-width="3.45" stroke-linecap="round" stroke-linejoin="round" opacity="1"/><path d="M691.0 356.0 C689.3 357.3 684.2 360.8 681.0 364.0 C677.8 367.2 673.5 373.2 672.0 375.0" fill="none" stroke="#555" stroke-width="1.38" stroke-linecap="round" stroke-linejoin="round" opacity="1"/><path d="M817.5 352.0 C819.2 353.0 824.6 355.7 828.0 358.0 C831.4 360.3 834.8 363.4 838.0 366.0 C841.2 368.6 845.9 372.5 847.5 373.8" fill="none" stroke="#2b2b2b" stroke-width="3.45" stroke-linecap="round" stroke-linejoin="round" opacity="1"/><path d="M820.0 357.0 C822.0 358.2 827.8 361.0 832.0 364.0 C836.2 367.0 842.8 373.2 845.0 375.0" fill="none" stroke="#555" stroke-width="1.38" stroke-linecap="round" stroke-linejoin="round" opacity="1"/><path d="M670.0 376.0 C669.8 377.5 668.3 382.3 668.5 385.0 C668.7 387.7 669.8 390.2 671.0 392.0 C672.2 393.8 675.2 395.3 676.0 396.0" fill="none" stroke="#333" stroke-width="1.72" stroke-linecap="round" stroke-linejoin="round" opacity="1"/><path d="M693.0 404.0 C691.5 403.3 687.0 399.7 684.0 400.0 C681.0 400.3 677.2 402.7 675.0 406.0 C672.8 409.3 671.2 415.0 671.0 420.0 C670.8 425.0 672.2 431.5 674.0 436.0 C675.8 440.5 679.0 444.3 682.0 447.0 C685.0 449.7 689.7 452.2 692.0 452.0 C694.3 451.8 695.3 447.0 696.0 446.0" fill="none" stroke="#3a3a3a" stroke-width="1.84" stroke-linecap="round" stroke-linejoin="round" opacity="1"/><path d="M679.0 412.0 C678.7 414.0 676.7 419.7 677.0 424.0 C677.3 428.3 680.3 435.7 681.0 438.0" fill="none" stroke="#555" stroke-width="1.61" stroke-linecap="round" stroke-linejoin="round" opacity="1"/><path d="M686.0 425.0 C686.2 426.3 686.2 430.3 687.0 433.0 C687.8 435.7 690.3 439.7 691.0 441.0" fill="none" stroke="#555" stroke-width="3.45" stroke-linecap="round" stroke-linejoin="round" opacity="0.8"/><path d="M824.0 404.0 C826.0 403.3 832.3 399.7 836.0 400.0 C839.7 400.3 843.7 402.7 846.0 406.0 C848.3 409.3 850.0 415.0 850.0 420.0 C850.0 425.0 848.0 432.0 846.0 436.0 C844.0 440.0 841.0 442.2 838.0 444.0 C835.0 445.8 829.7 446.5 828.0 447.0" fill="none" stroke="#3a3a3a" stroke-width="1.84" stroke-linecap="round" stroke-linejoin="round" opacity="1"/><path d="M840.0 410.0 C840.3 412.0 842.3 417.7 842.0 422.0 C841.7 426.3 838.7 433.7 838.0 436.0" fill="none" stroke="#555" stroke-width="1.61" stroke-linecap="round" stroke-linejoin="round" opacity="1"/><path d="M832.0 418.0 C831.7 420.0 830.8 426.3 830.0 430.0 C829.2 433.7 827.5 438.3 827.0 440.0" fill="none" stroke="#6a6a6a" stroke-width="2.99" stroke-linecap="round" stroke-linejoin="round" opacity="0.8"/><path d="M848.8 373.8 C849.0 375.7 850.3 381.8 850.0 385.0 C849.7 388.2 848.3 391.0 847.0 393.0 C845.7 395.0 842.8 396.3 842.0 397.0" fill="none" stroke="#333" stroke-width="1.72" stroke-linecap="round" stroke-linejoin="round" opacity="1"/><path d="M688.0 378.0 C686.7 380.3 682.0 388.3 680.0 392.0 C678.0 395.7 676.7 398.7 676.0 400.0" fill="none" stroke="#444" stroke-width="1.49" stroke-linecap="round" stroke-linejoin="round" opacity="1"/><path d="M696.3 335.0 L696.0 343.0 L695.6 350.0" fill="none" stroke="#262626" stroke-width="2.53" stroke-linecap="round" stroke-linejoin="round" opacity="1"/><path d="M697.5 336.0 C700.4 336.8 709.1 339.2 715.0 341.0 C720.9 342.8 727.6 345.4 733.0 347.0 C738.4 348.6 745.1 350.0 747.5 350.6" fill="none" stroke="#262626" stroke-width="2.53" stroke-linecap="round" stroke-linejoin="round" opacity="1"/><path d="M760.0 348.8 C763.3 347.9 773.3 345.2 780.0 343.5 C786.7 341.8 794.0 340.0 800.0 338.5 C806.0 337.0 813.6 335.1 816.3 334.4" fill="none" stroke="#262626" stroke-width="2.53" stroke-linecap="round" stroke-linejoin="round" opacity="1"/><path d="M815.0 330.0 L816.0 342.0 L816.9 351.0" fill="none" stroke="#333" stroke-width="2.07" stroke-linecap="round" stroke-linejoin="round" opacity="1"/><path d="M752.5 340.0 L752.8 353.0 L753.0 366.0" fill="none" stroke="#333" stroke-width="1.49" stroke-linecap="round" stroke-linejoin="round" opacity="1"/><path d="M722.5 367.0 C725.4 366.8 734.9 366.1 740.0 366.0 C745.1 365.9 748.0 366.5 753.0 366.5 C758.0 366.5 764.2 366.0 770.0 366.0 C775.8 366.0 784.6 366.4 787.5 366.5" fill="none" stroke="#3a3a3a" stroke-width="1.95" stroke-linecap="round" stroke-linejoin="round" opacity="1"/><path d="M722.0 366.0 C722.1 366.8 722.2 369.7 722.5 371.0 C722.8 372.3 723.3 373.5 723.5 374.0" fill="none" stroke="#262626" stroke-width="2.53" stroke-linecap="round" stroke-linejoin="round" opacity="1"/><path d="M787.5 364.5 L787.5 371.0" fill="none" stroke="#333" stroke-width="1.84" stroke-linecap="round" stroke-linejoin="round" opacity="1"/><path d="M701.3 372.0 C703.1 372.5 708.2 373.3 712.0 375.0 C715.8 376.7 720.2 379.2 724.0 382.0 C727.8 384.8 733.2 390.3 735.0 392.0" fill="none" stroke="#262626" stroke-width="2.3" stroke-linecap="round" stroke-linejoin="round" opacity="1"/><path d="M813.8 368.8 C811.5 369.3 804.8 370.1 800.0 372.0 C795.2 373.9 789.6 376.7 785.0 380.0 C780.4 383.3 774.6 390.0 772.5 392.0" fill="none" stroke="#262626" stroke-width="2.3" stroke-linecap="round" stroke-linejoin="round" opacity="1"/><path d="M723.0 371.0 C725.0 373.8 731.2 382.8 735.0 388.0 C738.8 393.2 743.1 398.8 746.0 402.0 C748.9 405.2 751.4 406.6 752.5 407.5" fill="none" stroke="#555" stroke-width="1.38" stroke-linecap="round" stroke-linejoin="round" opacity="1"/><path d="M787.5 371.0 C785.4 373.8 778.6 383.3 775.0 388.0 C771.4 392.7 768.3 396.2 766.0 399.0 C763.7 401.8 761.8 404.0 761.0 405.0" fill="none" stroke="#555" stroke-width="1.38" stroke-linecap="round" stroke-linejoin="round" opacity="1"/><path d="M752.5 407.0 L742.0 421.0 L732.5 435.0" fill="none" stroke="#3a3a3a" stroke-width="2.3" stroke-linecap="round" stroke-linejoin="round" opacity="1"/><path d="M761.0 405.0 L772.0 418.5 L783.0 432.5" fill="none" stroke="#444" stroke-width="1.72" stroke-linecap="round" stroke-linejoin="round" opacity="1"/><path d="M693.5 352.0 C693.5 355.8 693.2 367.8 693.2 375.0 C693.2 382.2 693.4 387.8 693.6 395.0 C693.8 402.2 693.9 410.5 694.5 418.0 C695.1 425.5 695.9 433.0 697.0 440.0 C698.1 447.0 700.6 456.7 701.3 460.0" fill="none" stroke="#262626" stroke-width="2.3" stroke-linecap="round" stroke-linejoin="round" opacity="1"/><path d="M817.5 352.0 C817.8 355.8 818.6 367.7 819.5 375.0 C820.4 382.3 822.4 389.3 823.0 396.0 C823.6 402.7 823.2 408.5 823.0 415.0 C822.8 421.5 822.5 428.3 822.0 435.0 C821.5 441.7 820.3 451.7 820.0 455.0" fill="none" stroke="#333" stroke-width="1.84" stroke-linecap="round" stroke-linejoin="round" opacity="1"/><path d="M823.0 396.0 C822.3 397.0 820.0 399.3 819.0 402.0 C818.0 404.7 817.3 410.3 817.0 412.0" fill="none" stroke="#333" stroke-width="1.72" stroke-linecap="round" stroke-linejoin="round" opacity="1"/><path d="M697.5 461.0 L712.0 474.0 L727.0 488.0 L741.3 502.0 L756.3 517.5" fill="none" stroke="#333" stroke-width="2.64" stroke-linecap="round" stroke-linejoin="round" opacity="1"/><path d="M699.0 466.0 L715.0 482.0 L732.0 497.0" fill="none" stroke="#8a8a8a" stroke-width="1.15" stroke-linecap="round" stroke-linejoin="round" opacity="0.7"/><path d="M825.0 450.0 L808.0 467.0 L790.0 485.0 L772.5 503.0" fill="none" stroke="#3a3a3a" stroke-width="2.07" stroke-linecap="round" stroke-linejoin="round" opacity="1"/><path d="M822.0 458.0 L805.0 475.0 L786.0 493.0 L774.0 505.0" fill="none" stroke="#777" stroke-width="1.15" stroke-linecap="round" stroke-linejoin="round" opacity="0.8"/><path d="M750.0 505.0 C751.3 505.2 755.3 506.3 758.0 506.5 C760.7 506.7 763.6 506.6 766.0 506.0 C768.4 505.4 771.4 503.5 772.5 503.0" fill="none" stroke="#555" stroke-width="1.49" stroke-linecap="round" stroke-linejoin="round" opacity="1"/><path d="M752.5 436.0 C752.6 437.3 752.6 441.3 753.0 444.0 C753.4 446.7 754.7 450.7 755.0 452.0" fill="none" stroke="#1c1c1c" stroke-width="2.86" stroke-linecap="round" stroke-linejoin="round" opacity="1"/><path d="M759.0 436.5 C759.1 438.8 759.5 445.2 759.8 450.0 C760.1 454.8 760.4 460.5 760.8 465.0 C761.2 469.5 761.5 473.8 762.0 477.0 C762.5 480.2 763.5 482.8 763.8 484.0" fill="none" stroke="#262626" stroke-width="1.65" stroke-linecap="round" stroke-linejoin="round" opacity="1"/><path d="M729.0 437.5 L729.3 445.0" fill="none" stroke="#444" stroke-width="1.98" stroke-linecap="round" stroke-linejoin="round" opacity="1"/><path d="M732.5 442.5 C734.6 442.2 740.4 440.9 745.0 440.5 C749.6 440.1 755.0 440.0 760.0 440.0 C765.0 440.0 770.2 440.2 775.0 440.5 C779.8 440.8 786.7 441.3 789.0 441.5" fill="none" stroke="#5a5a5a" stroke-width="1.43" stroke-linecap="round" stroke-linejoin="round" opacity="1"/><path d="M788.5 438.5 L788.8 443.5" fill="none" stroke="#555" stroke-width="1.65" stroke-linecap="round" stroke-linejoin="round" opacity="1"/><path d="M731.5 460.0 C732.2 460.2 733.8 461.0 736.0 461.5 C738.2 462.0 741.0 462.6 745.0 463.0 C749.0 463.4 755.0 463.9 760.0 464.0 C765.0 464.1 770.4 463.8 775.0 463.5 C779.6 463.2 784.7 462.8 787.5 462.0 C790.3 461.2 791.2 459.5 792.0 459.0" fill="none" stroke="#1c1c1c" stroke-width="2.09" stroke-linecap="round" stroke-linejoin="round" opacity="1"/><path d="M731.5 459.5 C732.1 460.0 733.9 461.2 735.0 462.5 C736.1 463.8 736.8 465.5 738.0 467.0 C739.2 468.5 740.8 470.2 742.5 471.5 C744.2 472.8 747.1 474.4 748.0 475.0" fill="none" stroke="#161616" stroke-width="3.3" stroke-linecap="round" stroke-linejoin="round" opacity="1"/><path d="M792.5 457.0 C793.2 457.3 796.6 458.2 796.5 459.0 C796.4 459.8 792.8 461.5 792.0 462.0" fill="none" stroke="#1c1c1c" stroke-width="3.3" stroke-linecap="round" stroke-linejoin="round" opacity="1"/><path d="M789.0 465.0 C788.3 465.8 786.5 468.2 785.0 469.5 C783.5 470.8 780.8 472.4 780.0 473.0" fill="none" stroke="#1c1c1c" stroke-width="2.53" stroke-linecap="round" stroke-linejoin="round" opacity="1"/><path d="M748.0 475.0 C749.0 475.3 752.0 476.6 754.0 477.0 C756.0 477.4 757.7 477.5 760.0 477.5 C762.3 477.5 765.3 477.5 768.0 477.0 C770.7 476.5 774.7 474.9 776.0 474.5" fill="none" stroke="#333" stroke-width="1.32" stroke-linecap="round" stroke-linejoin="round" opacity="1"/><path d="M703.0 432.0 L709.0 440.0" fill="none" stroke="#7a7a7a" stroke-width="1.1" stroke-linecap="round" stroke-linejoin="round" opacity="0.7"/><path d="M706.0 433.5 L712.0 441.5" fill="none" stroke="#7a7a7a" stroke-width="1.1" stroke-linecap="round" stroke-linejoin="round" opacity="0.7"/><path d="M709.0 435.0 L715.0 443.0" fill="none" stroke="#7a7a7a" stroke-width="1.1" stroke-linecap="round" stroke-linejoin="round" opacity="0.7"/><path d="M712.0 436.5 L718.0 444.5" fill="none" stroke="#7a7a7a" stroke-width="1.1" stroke-linecap="round" stroke-linejoin="round" opacity="0.7"/><path d="M800.0 440.0 L806.0 447.0" fill="none" stroke="#c8c8c8" stroke-width="1.1" stroke-linecap="round" stroke-linejoin="round" opacity="0.8"/><path d="M803.0 439.0 L809.0 446.0" fill="none" stroke="#c8c8c8" stroke-width="1.1" stroke-linecap="round" stroke-linejoin="round" opacity="0.8"/><path d="M806.0 438.0 L812.0 445.0" fill="none" stroke="#c8c8c8" stroke-width="1.1" stroke-linecap="round" stroke-linejoin="round" opacity="0.8"/><path d="M809.0 437.0 L815.0 444.0" fill="none" stroke="#c8c8c8" stroke-width="1.1" stroke-linecap="round" stroke-linejoin="round" opacity="0.8"/><path d="M741.3 176.9 C741.4 178.9 741.3 183.1 741.9 188.8 C742.5 194.5 744.1 204.0 745.0 211.0 C745.9 218.0 746.6 224.5 747.5 231.0 C748.4 237.5 749.9 243.9 750.6 250.0 C751.4 256.1 751.9 260.8 752.0 267.5 C752.1 274.2 751.5 281.2 751.5 290.0 C751.5 298.8 751.8 310.8 752.0 320.0 C752.2 329.2 752.4 340.8 752.5 345.0" fill="none" stroke="#2e2e2e" stroke-width="2.84" stroke-linecap="round" stroke-linejoin="round" opacity="1"/><path d="M741.3 177.0 C741.1 180.0 740.5 188.8 740.0 195.0 C739.5 201.2 738.4 208.8 738.0 214.0 C737.6 219.2 737.6 224.0 737.5 226.0" fill="none" stroke="#555" stroke-width="1.76" stroke-linecap="round" stroke-linejoin="round" opacity="1"/><path d="M727.3 183.0 C727.5 185.6 728.0 193.1 728.8 198.8 C729.6 204.6 730.6 211.5 731.9 217.5 C733.1 223.5 734.7 229.6 736.3 235.0 C737.9 240.4 739.8 245.0 741.3 250.0 C742.8 255.0 744.1 261.0 745.0 265.0 C745.9 269.0 746.6 272.3 746.9 273.8" fill="none" stroke="#2e2e2e" stroke-width="2.84" stroke-linecap="round" stroke-linejoin="round" opacity="1"/><path d="M720.6 193.0 C720.8 195.4 721.4 202.4 721.9 207.5 C722.4 212.6 723.1 218.4 723.8 223.8 C724.5 229.2 725.5 234.4 726.3 240.0 C727.1 245.6 727.9 251.5 728.8 257.5 C729.7 263.5 730.5 268.1 731.9 276.0 C733.3 283.9 735.0 295.2 737.0 305.0 C739.0 314.8 742.2 327.8 744.0 335.0 C745.8 342.2 747.3 345.8 748.0 348.0" fill="none" stroke="#6a6a6a" stroke-width="1.49" stroke-linecap="round" stroke-linejoin="round" opacity="0.85"/><path d="M722.5 215.0 C722.9 219.2 723.9 232.2 725.0 240.0 C726.1 247.8 727.7 254.5 729.0 262.0 C730.3 269.5 731.2 275.7 733.0 285.0 C734.8 294.3 737.8 308.0 740.0 318.0 C742.2 328.0 745.0 340.5 746.0 345.0" fill="none" stroke="#555" stroke-width="2.16" stroke-linecap="round" stroke-linejoin="round" opacity="0.8"/><path d="M716.3 222.0 C716.4 225.8 716.7 237.4 716.9 245.0 C717.1 252.6 717.2 260.0 717.5 267.5 C717.8 275.0 717.4 282.1 718.5 290.0 C719.6 297.9 721.6 307.5 724.0 315.0 C726.4 322.5 729.7 329.3 733.0 335.0 C736.3 340.7 742.2 346.7 744.0 349.0" fill="none" stroke="#2e2e2e" stroke-width="2.56" stroke-linecap="round" stroke-linejoin="round" opacity="1"/><path d="M698.0 242.0 C699.0 243.3 702.0 246.8 703.8 250.0 C705.6 253.2 707.3 257.6 708.8 261.3 C710.2 265.1 711.5 269.1 712.5 272.5 C713.5 275.9 713.8 277.4 715.0 282.0 C716.2 286.6 717.7 293.3 720.0 300.0 C722.3 306.7 725.5 314.3 729.0 322.0 C732.5 329.7 739.0 342.0 741.0 346.0" fill="none" stroke="#333" stroke-width="2.56" stroke-linecap="round" stroke-linejoin="round" opacity="1"/><path d="M761.5 185.6 C760.8 187.6 758.8 193.2 757.5 197.5 C756.2 201.8 754.9 206.5 753.8 211.3 C752.6 216.1 751.3 222.4 750.6 226.3 C749.9 230.2 749.6 233.6 749.4 235.0" fill="none" stroke="#444" stroke-width="2.29" stroke-linecap="round" stroke-linejoin="round" opacity="1"/><path d="M761.5 185.6 C761.8 187.2 762.4 190.8 763.0 195.0 C763.6 199.2 764.5 205.2 765.0 211.0 C765.5 216.8 765.9 223.5 766.3 230.0 C766.7 236.5 767.2 243.8 767.5 250.0 C767.8 256.2 767.8 262.2 768.0 267.5 C768.2 272.8 768.7 279.6 768.8 282.0" fill="none" stroke="#555" stroke-width="1.89" stroke-linecap="round" stroke-linejoin="round" opacity="1"/><path d="M750.0 208.0 C749.9 209.5 749.7 214.0 749.6 217.0 C749.5 220.0 749.4 224.5 749.4 226.0" fill="none" stroke="#444" stroke-width="2.03" stroke-linecap="round" stroke-linejoin="round" opacity="1"/><path d="M756.0 211.0 C755.9 214.2 756.0 223.5 755.6 230.0 C755.2 236.5 754.2 241.3 753.8 250.0 C753.4 258.7 753.1 276.7 753.0 282.0" fill="none" stroke="#3a3a3a" stroke-width="2.03" stroke-linecap="round" stroke-linejoin="round" opacity="1"/><path d="M775.3 212.0 C774.9 213.8 773.7 218.2 773.0 222.5 C772.3 226.8 771.8 232.1 771.3 237.5 C770.8 242.9 770.2 252.1 770.0 255.0" fill="none" stroke="#555" stroke-width="1.76" stroke-linecap="round" stroke-linejoin="round" opacity="1"/><path d="M775.3 212.0 C775.6 214.4 776.3 221.2 776.9 226.3 C777.5 231.4 778.2 238.6 778.8 242.5 C779.4 246.4 780.3 248.8 780.6 250.0" fill="none" stroke="#444" stroke-width="2.03" stroke-linecap="round" stroke-linejoin="round" opacity="1"/><path d="M780.6 250.0 C781.3 248.3 783.8 245.0 785.0 240.0 C786.2 235.0 787.5 223.3 788.0 220.0" fill="none" stroke="#1f1f1f" stroke-width="3.24" stroke-linecap="round" stroke-linejoin="round" opacity="1"/><path d="M788.0 220.0 C787.7 223.3 786.8 235.0 786.3 240.0 C785.8 245.0 785.2 248.3 785.0 250.0" fill="none" stroke="#555" stroke-width="1.76" stroke-linecap="round" stroke-linejoin="round" opacity="1"/><path d="M794.8 216.3 C794.9 218.6 795.7 225.2 795.6 230.0 C795.5 234.8 794.6 239.4 794.4 245.0 C794.2 250.6 794.7 257.6 794.4 263.8 C794.1 270.0 793.4 275.1 792.5 282.0 C791.6 288.9 790.6 297.8 789.0 305.0 C787.4 312.2 784.9 319.2 783.0 325.0 C781.1 330.8 778.4 337.5 777.5 340.0" fill="none" stroke="#333" stroke-width="2.29" stroke-linecap="round" stroke-linejoin="round" opacity="1"/><path d="M791.3 225.0 L793.0 240.0" fill="none" stroke="#444" stroke-width="2.43" stroke-linecap="round" stroke-linejoin="round" opacity="1"/><path d="M803.5 259.4 C803.1 261.0 802.2 265.0 801.3 268.8 C800.4 272.6 799.4 276.8 798.0 282.0 C796.6 287.2 795.2 293.3 793.0 300.0 C790.8 306.7 787.4 315.2 785.0 322.0 C782.6 328.8 779.8 337.8 778.8 341.0" fill="none" stroke="#2b2b2b" stroke-width="3.1" stroke-linecap="round" stroke-linejoin="round" opacity="1"/><path d="M802.0 262.0 C801.2 265.0 799.0 273.7 797.0 280.0 C795.0 286.3 792.5 292.5 790.0 300.0 C787.5 307.5 783.3 320.8 782.0 325.0" fill="none" stroke="#666" stroke-width="1.35" stroke-linecap="round" stroke-linejoin="round" opacity="1"/><path d="M700.0 283.0 C700.8 285.8 703.0 294.7 705.0 300.0 C707.0 305.3 709.2 309.7 712.0 315.0 C714.8 320.3 718.2 327.0 722.0 332.0 C725.8 337.0 732.8 342.8 735.0 345.0" fill="none" stroke="#555" stroke-width="1.62" stroke-linecap="round" stroke-linejoin="round" opacity="1"/><path d="M696.0 285.0 C697.0 287.8 699.7 296.2 702.0 302.0 C704.3 307.8 708.7 317.0 710.0 320.0" fill="none" stroke="#777" stroke-width="1.35" stroke-linecap="round" stroke-linejoin="round" opacity="1"/><path d="M708.0 285.0 C709.0 288.0 711.7 297.2 714.0 303.0 C716.3 308.8 718.8 314.2 722.0 320.0 C725.2 325.8 731.2 335.0 733.0 338.0" fill="none" stroke="#555" stroke-width="1.62" stroke-linecap="round" stroke-linejoin="round" opacity="1"/><path d="M710.0 280.0 C711.2 283.3 714.5 293.8 717.0 300.0 C719.5 306.2 722.3 312.2 725.0 317.5 C727.7 322.8 730.5 327.8 733.0 332.0 C735.5 336.2 738.8 340.8 740.0 342.5" fill="none" stroke="#2b2b2b" stroke-width="2.47" stroke-linecap="round" stroke-linejoin="round" opacity="1"/><path d="M716.0 280.0 C717.2 282.8 720.7 291.8 723.0 297.0 C725.3 302.2 727.5 305.8 730.0 311.0 C732.5 316.2 735.5 322.8 738.0 328.0 C740.5 333.2 743.8 340.1 745.0 342.5" fill="none" stroke="#262626" stroke-width="2.73" stroke-linecap="round" stroke-linejoin="round" opacity="1"/><path d="M725.0 280.0 C725.8 282.2 728.3 288.8 730.0 293.0 C731.7 297.2 733.0 299.3 735.0 305.0 C737.0 310.7 739.9 320.3 742.0 327.0 C744.1 333.7 746.6 342.0 747.5 345.0" fill="none" stroke="#3a3a3a" stroke-width="1.95" stroke-linecap="round" stroke-linejoin="round" opacity="1"/><path d="M731.0 280.0 C731.8 282.7 734.0 290.8 735.5 296.0 C737.0 301.2 738.4 305.3 740.0 311.0 C741.6 316.7 743.5 323.9 745.0 330.0 C746.5 336.1 748.2 344.6 748.8 347.5" fill="none" stroke="#444" stroke-width="1.69" stroke-linecap="round" stroke-linejoin="round" opacity="1"/><path d="M797.5 292.5 C796.6 295.8 794.1 304.9 792.0 312.0 C789.9 319.1 786.2 331.2 785.0 335.0" fill="none" stroke="#444" stroke-width="1.82" stroke-linecap="round" stroke-linejoin="round" opacity="1"/><path d="M792.5 280.0 C791.6 283.3 788.8 293.3 787.0 300.0 C785.2 306.7 783.6 313.3 782.0 320.0 C780.4 326.7 778.2 336.7 777.5 340.0" fill="none" stroke="#262626" stroke-width="2.86" stroke-linecap="round" stroke-linejoin="round" opacity="1"/><path d="M721.5 212.0 L723.5 232.0" fill="none" stroke="#8a8a8a" stroke-width="1.6" stroke-linecap="round" stroke-linejoin="round" opacity="0.75"/><path d="M722.1 221.0 L724.4 241.0" fill="none" stroke="#8a8a8a" stroke-width="1.6" stroke-linecap="round" stroke-linejoin="round" opacity="0.75"/><path d="M722.7 230.0 L725.3 250.0" fill="none" stroke="#8a8a8a" stroke-width="1.6" stroke-linecap="round" stroke-linejoin="round" opacity="0.75"/><path d="M723.3 239.0 L726.2 259.0" fill="none" stroke="#8a8a8a" stroke-width="1.6" stroke-linecap="round" stroke-linejoin="round" opacity="0.75"/><path d="M723.9 248.0 L727.1 268.0" fill="none" stroke="#8a8a8a" stroke-width="1.6" stroke-linecap="round" stroke-linejoin="round" opacity="0.75"/><path d="M724.5 257.0 L728.0 277.0" fill="none" stroke="#8a8a8a" stroke-width="1.6" stroke-linecap="round" stroke-linejoin="round" opacity="0.75"/><path d="M725.1 266.0 L728.9 286.0" fill="none" stroke="#8a8a8a" stroke-width="1.6" stroke-linecap="round" stroke-linejoin="round" opacity="0.75"/><path d="M724.0 238.0 L727.0 262.0" fill="none" stroke="#777" stroke-width="1.3" stroke-linecap="round" stroke-linejoin="round" opacity="0.7"/><path d="M725.1 245.0 L728.2 269.0" fill="none" stroke="#777" stroke-width="1.3" stroke-linecap="round" stroke-linejoin="round" opacity="0.7"/><path d="M726.2 252.0 L729.4 276.0" fill="none" stroke="#777" stroke-width="1.3" stroke-linecap="round" stroke-linejoin="round" opacity="0.7"/><path d="M727.3 259.0 L730.6 283.0" fill="none" stroke="#777" stroke-width="1.3" stroke-linecap="round" stroke-linejoin="round" opacity="0.7"/><path d="M728.4 266.0 L731.8 290.0" fill="none" stroke="#777" stroke-width="1.3" stroke-linecap="round" stroke-linejoin="round" opacity="0.7"/><path d="M729.5 273.0 L733.0 297.0" fill="none" stroke="#777" stroke-width="1.3" stroke-linecap="round" stroke-linejoin="round" opacity="0.7"/><path d="M757.0 300.0 L758.5 345.0" fill="none" stroke="#777" stroke-width="1.0" stroke-linecap="round" stroke-linejoin="round" opacity="0.7"/><path d="M760.0 304.0 L761.5 343.0" fill="none" stroke="#777" stroke-width="1.0" stroke-linecap="round" stroke-linejoin="round" opacity="0.7"/><path d="M763.0 308.0 L764.5 341.0" fill="none" stroke="#777" stroke-width="1.0" stroke-linecap="round" stroke-linejoin="round" opacity="0.7"/><path d="M766.0 312.0 L767.5 339.0" fill="none" stroke="#777" stroke-width="1.0" stroke-linecap="round" stroke-linejoin="round" opacity="0.7"/><path d="M769.0 316.0 L770.5 337.0" fill="none" stroke="#777" stroke-width="1.0" stroke-linecap="round" stroke-linejoin="round" opacity="0.7"/><path d="M772.0 320.0 L773.5 335.0" fill="none" stroke="#777" stroke-width="1.0" stroke-linecap="round" stroke-linejoin="round" opacity="0.7"/><path d="M722.0 318.0 L732.0 345.0" fill="none" stroke="#666" stroke-width="1.0" stroke-linecap="round" stroke-linejoin="round" opacity="0.7"/><path d="M726.0 318.0 L736.0 345.0" fill="none" stroke="#666" stroke-width="1.0" stroke-linecap="round" stroke-linejoin="round" opacity="0.7"/><path d="M730.0 318.0 L740.0 345.0" fill="none" stroke="#666" stroke-width="1.0" stroke-linecap="round" stroke-linejoin="round" opacity="0.7"/><path d="M734.0 318.0 L744.0 345.0" fill="none" stroke="#666" stroke-width="1.0" stroke-linecap="round" stroke-linejoin="round" opacity="0.7"/><path d="M738.0 318.0 L748.0 345.0" fill="none" stroke="#666" stroke-width="1.0" stroke-linecap="round" stroke-linejoin="round" opacity="0.7"/><circle cx="873" cy="348" r="1.800" fill="none" stroke="#777" stroke-width=".8"/></g></svg>
<!-- windows taskbar -->
<div style="left:0;top:868px;width:1600px;height:32px;background:#1f2027"></div>
<svg style="left:12px;top:877px" width="14" height="14" viewBox="0 0 14 14"><path d="M0 2l5.800-.9v5.500h-5.800zM6.600 1l7.400-1v6.600h-7.400zM0 7.400h5.800v5.500l-5.800-.9zM6.600 7.400h7.400v6.600l-7.400-1z" fill="#fff"/></svg>
<div style="left:38px;top:869px;width:268px;height:31px;background:#f1f1f1"></div>
<svg style="left:46px;top:876px" width="15" height="15" viewBox="0 0 15 15"><circle cx="9" cy="5.500" r="4" fill="none" stroke="#3a3a3a" stroke-width="1.300"/><path d="M6 8.500l-5 5" stroke="#3a3a3a" stroke-width="1.400"/></svg>
<div class="t" style="left:69px;top:876px;font-size:13px;line-height:15px;font-weight:400;color:#4c4c4c;letter-spacing:.02px">검색하려면 여기에 입력하십시오.</div>
<svg style="left:317px;top:876px" width="17" height="16" viewBox="0 0 17 16"><path d="M2.500 2v12M9.500 2v12M2.500 4.500h7M2.500 11.500h7" fill="none" stroke="#f2f2f2" stroke-width="1.300"/><path d="M13.500 2v3.500M13.500 8v6" stroke="#f2f2f2" stroke-width="1.300"/><circle cx="13.500" cy="6.700" r="1" fill="#f2f2f2"/></svg>
<div style="left:1315px;top:868px;width:38px;height:32px;background:#42434b"></div>
<svg style="left:355.3px;top:874.800px" width="19.400" height="19.400" viewBox="0 0 22 22"><defs><linearGradient id="ed" x1="0" y1="0" x2="1" y2="1"><stop offset="0" stop-color="#35c1f1"/><stop offset=".5" stop-color="#1b80c4"/><stop offset="1" stop-color="#0c59a4"/></linearGradient></defs><circle cx="11" cy="11" r="9.500" fill="url(#ed)"/><path d="M3 9a8.500 8.500 0 0 1 16.500 0c.5 3.500-3 5-6 4 2-1 2-4.500-1.500-5.500-4-1-7 1.500-9 1.500z" fill="#5fd66a"/><path d="M8 11.500c0 4 3 7 8 6-3 3.500-10 3-12-2.500 0-3 2.500-4.500 4-3.500z" fill="#0f4a8a" opacity=".8"/></svg>
<svg style="left:393.3px;top:874.800px" width="19.400" height="19.400" viewBox="0 0 22 22"><path d="M1.500 9l9.500-7 9.500 7v10.500h-19z" fill="#1691d8"/><path d="M1.500 9l9.500 6.500 9.500-6.500v10.500h-19z" fill="#35b3f2"/><path d="M3.500 8.500h15l-7.500 6z" fill="#f4fbff"/><path d="M1.500 9l9.500-7 9.500 7h-2l-7.500-5-7.500 5z" fill="#0f78c4"/></svg>
<svg style="left:432.3px;top:874.800px" width="19.400" height="19.400" viewBox="0 0 22 22"><circle cx="11" cy="11" r="9.700" fill="#e33b2e"/><path d="M11 11L2.600 6.200A9.700 9.700 0 0 0 9.500 20.600z" fill="#2da94f"/><path d="M11 11l-1.500 9.600A9.700 9.700 0 0 0 20.200 7.500z" fill="#fdd23c"/><path d="M11 11l9.200-3.500A9.700 9.700 0 0 0 2.600 6.200z" fill="#e33b2e"/><circle cx="11" cy="11" r="4.500" fill="#f4f4f4"/><circle cx="11" cy="11" r="3.500" fill="#4a8af4"/></svg>
<svg style="left:471.3px;top:874.800px" width="19.400" height="19.400" viewBox="0 0 22 22"><path d="M2 4h7l1.500 1.500h9.500v13.500h-18z" fill="#f0b429"/><path d="M2 7.500h18v11.500h-18z" fill="#fbd55a"/><path d="M5.500 12.500h11v6.500h-11z" fill="#2f86d8"/><path d="M7.500 15h7v4h-7z" fill="#fbd55a"/></svg>
<svg style="left:510.3px;top:874.800px" width="19.400" height="19.400" viewBox="0 0 22 22"><rect x="2" y="2" width="15" height="14.500" rx="3" fill="#6a73c9"/><path d="M5 6q4.500-2 9 0l1.500 6q-1.500 1.500-3 1.500l-.8-1.300h-4.400l-.8 1.300q-1.500 0-3-1.500z" fill="#e8eafc"/><circle cx="7.800" cy="9.500" r="1.200" fill="#6a73c9"/><circle cx="11.200" cy="9.500" r="1.200" fill="#6a73c9"/><circle cx="15" cy="15.500" r="5.200" fill="#f0434a"/><circle cx="15" cy="15.500" r="2.200" fill="#fff"/></svg>
<svg style="left:548.3px;top:874.800px" width="19.400" height="19.400" viewBox="0 0 22 22"><path d="M7.500 6v-2a3.500 3.500 0 0 1 7 0v2" fill="none" stroke="#d8d8d8" stroke-width="1.400"/><path d="M2 6h18v14h-18z" fill="#fdfdfd"/><rect x="6.500" y="9" width="4" height="4" fill="#f35325"/><rect x="11.500" y="9" width="4" height="4" fill="#81bc06"/><rect x="6.500" y="14" width="4" height="4" fill="#05a6f0"/><rect x="11.500" y="14" width="4" height="4" fill="#ffba08"/></svg>
<svg style="left:587.3px;top:874.800px" width="19.400" height="19.400" viewBox="0 0 22 22"><text x="11" y="19" text-anchor="middle" font-family="Liberation Sans,sans-serif" font-weight="bold" font-style="italic" font-size="24" fill="#35b8f2">e</text><ellipse cx="11" cy="10" rx="10.500" ry="4.200" fill="none" stroke="#f3c224" stroke-width="1.500" transform="rotate(-28 11 10)" stroke-dasharray="24 14 30"/></svg>
<svg style="left:626.3px;top:874.800px" width="19.400" height="19.400" viewBox="0 0 22 22"><path d="M2 11.500l11-5.500 7 3-11.500 6.500z" fill="#4c4c4e"/><path d="M2 11.500l6.500 4v1.500l-6.500-4z" fill="#2e2e30"/><path d="M8.500 15.500l11.500-6.500v1.500l-11.500 6.500z" fill="#3a3a3c"/></svg>
<svg style="left:665.3px;top:874.800px" width="19.400" height="19.400" viewBox="0 0 22 22"><circle cx="11" cy="11" r="10" fill="#fdfdfd"/><text x="11" y="15.500" text-anchor="middle" font-family="Liberation Sans,sans-serif" font-size="14" fill="#38b4ea">w</text></svg>
<svg style="left:703.3px;top:874.800px" width="19.400" height="19.400" viewBox="0 0 22 22"><circle cx="11" cy="11.500" r="8.500" fill="none" stroke="#8d8e90" stroke-width="2.600"/><path d="M4 6.500a9 9 0 0 1 14 0" fill="none" stroke="#f4c842" stroke-width="2.800"/><path d="M11 8v6l-4.500 4.500M11 14l4.500 4.500" fill="none" stroke="#8d8e90" stroke-width="2"/></svg>
<svg style="left:742.3px;top:874.800px" width="19.400" height="19.400" viewBox="0 0 22 22"><rect x="2.500" y="2.500" width="17" height="17" fill="#e4e4e4"/><rect x="2.500" y="2.500" width="17" height="17" fill="none" stroke="#bdbdbd"/><path d="M11 5.500C7.500 5.500 5 8 5 11s2.500 5 6 5c3.500 0 6-2 6-4.800 0-2-1.800-3.400-4-3.400-2.500 0-4 1.400-4 3 0 1.200 1 2 2.300 2 1.500 0 2.600-.8 2.600-1.800" fill="none" stroke="#8a8a8a" stroke-width="1.500" stroke-linecap="round"/></svg>
<svg style="left:780.8px;top:874.800px" width="19.400" height="19.400" viewBox="0 0 22 22"><circle cx="11" cy="11" r="9.700" fill="#15396c"/><circle cx="11" cy="11" r="9.700" fill="url(#st)" opacity=".5"/><defs><linearGradient id="st" x1="0" y1="0" x2="0" y2="1"><stop offset="0" stop-color="#0c1f3f"/><stop offset="1" stop-color="#2a78c8"/></linearGradient></defs><circle cx="14.500" cy="8" r="3.300" fill="none" stroke="#f4f4f4" stroke-width="1.500"/><circle cx="14.500" cy="8" r="1.400" fill="#f4f4f4"/><path d="M1.500 11.500l6.500 3 3.500-3.500" fill="none" stroke="#f4f4f4" stroke-width="2.400"/><circle cx="7.500" cy="15" r="2.400" fill="#f4f4f4"/></svg>
<svg style="left:820.3px;top:874.800px" width="19.400" height="19.400" viewBox="0 0 22 22"><path d="M3.500 14v-3.500a7.500 7.500 0 0 1 15 0v3.500" fill="none" stroke="#ee4680" stroke-width="2.800"/><rect x="1.500" y="11" width="5.500" height="8" rx="2.500" fill="#ee4680"/><rect x="15" y="11" width="5.500" height="8" rx="2.500" fill="#ee4680"/><path d="M18 18q-1 3-6 3" fill="none" stroke="#c82c64" stroke-width="1.600"/><circle cx="11.500" cy="20.500" r="1.500" fill="#c82c64"/></svg>
<svg style="left:858.8px;top:874.800px" width="19.400" height="19.400" viewBox="0 0 22 22"><path d="M4 2.500q7 1.500 14 0l-1 6 1 3-1.500 7q-5.500 2.500-11 0l-1.500-7 1-3z" fill="#3a2c10" stroke="#d9a441" stroke-width="1.600"/><text x="11" y="15.500" text-anchor="middle" font-family="Liberation Serif,serif" font-weight="bold" font-size="12" fill="#e8b653">R</text></svg>
<svg style="left:897.8px;top:874.800px" width="19.400" height="19.400" viewBox="0 0 22 22"><path d="M11 1.500l8.500 4.800v9.400l-8.500 4.800-8.500-4.800v-9.400z" fill="#1f2027" stroke="#2c8fb8" stroke-width="1.500"/><path d="M2.500 15.700l8.500 4.800 8.500-4.800" fill="none" stroke="#6b3fb0" stroke-width="1.500"/><text x="11" y="13.500" text-anchor="middle" font-family="Liberation Sans,sans-serif" font-size="7" fill="#35b0d8">nox</text></svg>
<svg style="left:936.3px;top:874.800px" width="19.400" height="19.400" viewBox="0 0 22 22"><defs><radialGradient id="mga" cx=".4" cy=".3" r=".8"><stop offset="0" stop-color="#9fd4ff"/><stop offset=".45" stop-color="#1f86e0"/><stop offset="1" stop-color="#0a3f9a"/></radialGradient></defs><circle cx="11" cy="11" r="9.800" fill="url(#mga)" stroke="#c8d4e4" stroke-width=".8"/><text x="10.500" y="15" text-anchor="middle" font-family="Liberation Serif,serif" font-style="italic" font-weight="bold" font-size="15" fill="#fff">m</text><path d="M3.500 15.500q7.500 1 15 -1" fill="none" stroke="#fff" stroke-width="1.200"/></svg>
<svg style="left:974.8px;top:874.800px" width="19.400" height="19.400" viewBox="0 0 22 22"><defs><radialGradient id="mgb" cx=".4" cy=".3" r=".8"><stop offset="0" stop-color="#9fd4ff"/><stop offset=".45" stop-color="#1f86e0"/><stop offset="1" stop-color="#0a3f9a"/></radialGradient></defs><circle cx="11" cy="11" r="9.800" fill="url(#mgb)" stroke="#c8d4e4" stroke-width=".8"/><text x="10.500" y="15" text-anchor="middle" font-family="Liberation Serif,serif" font-style="italic" font-weight="bold" font-size="15" fill="#fff">m</text><path d="M3.500 15.500q7.500 1 15 -1" fill="none" stroke="#fff" stroke-width="1.200"/></svg>
<svg style="left:1013.3px;top:874.800px" width="19.400" height="19.400" viewBox="0 0 22 22"><path d="M6 4.500l10.500 13M17 5l-11.500 12.500" stroke="#a9aaa4" stroke-width="2.200" stroke-linecap="round"/><path d="M6 4.500l2.500 3M17 5l-2.500 2.800M5.500 17.500l2.500-2.800M16.500 17.500l-2.500-3" stroke="#c8aa4a" stroke-width="2.400" stroke-linecap="round"/><circle cx="11.200" cy="11" r="1.800" fill="#3a9ed8"/></svg>
<svg style="left:1052.8px;top:874.800px" width="19.400" height="19.400" viewBox="0 0 22 22"><path d="M3 2h16v14.500l-8 4-8-4z" fill="#0c0c0c" stroke="#2a2a2a" stroke-width=".6"/><text x="11" y="11.500" text-anchor="middle" font-family="Liberation Sans,sans-serif" font-weight="bold" font-size="8.500" fill="#fff" textLength="13" lengthAdjust="spacingAndGlyphs">EPIC</text><text x="11" y="15.500" text-anchor="middle" font-family="Liberation Sans,sans-serif" font-weight="bold" font-size="3" fill="#ddd">GAMES</text><path d="M8.500 18h5l-2.500 1.200z" fill="#ddd"/></svg>
<svg style="left:1091.3px;top:874.800px" width="19.400" height="19.400" viewBox="0 0 22 22"><circle cx="12" cy="11.500" r="8" fill="#0d3b4a" stroke="#8a6a1e" stroke-width="1.200"/><path d="M10 5q7 1 8 7t-6 8z" fill="#1fa2b8"/><text x="10.500" y="19.500" text-anchor="middle" font-family="Liberation Serif,serif" font-weight="bold" font-size="21" fill="#c09030" stroke="#7a5816" stroke-width=".4">L</text></svg>
<svg style="left:1130.3px;top:874.800px" width="19.400" height="19.400" viewBox="0 0 22 22"><ellipse cx="11" cy="9" rx="8.500" ry="7" fill="#f6c9cf"/><rect x="8" y="15" width="6" height="5.500" rx="1.500" fill="#f6c9cf"/><circle cx="7.500" cy="9.500" r="2" fill="#1c1c1c"/><circle cx="14.500" cy="9.500" r="2" fill="#1c1c1c"/><path d="M8.500 13h5" stroke="#1c1c1c" stroke-width="1.100"/><path d="M6.500 12.500v3M15.500 12.500v3" stroke="#8ad0f0" stroke-width="1.300"/></svg>
<svg style="left:1168.8px;top:874.800px" width="19.400" height="19.400" viewBox="0 0 22 22"><defs><radialGradient id="sn"><stop offset="0" stop-color="#ffd23a"/><stop offset=".6" stop-color="#f88a1a"/><stop offset="1" stop-color="#e8501a"/></radialGradient></defs><path d="M11 1l2 2.500 3-1.500.5 3 3 .5-1 3 2.500 2-2.500 2 1 3-3 .5-.5 3-3-1.500-2 2.500-2-2.500-3 1.500-.5-3-3-.5 1-3-2.500-2 2.500-2-1-3 3-.5.500-3 3 1.500z" fill="url(#sn)"/></svg>
<svg style="left:1207.8px;top:874.800px" width="19.400" height="19.400" viewBox="0 0 22 22"><path d="M3 3h6v2h4v-2h6v2h2v7h-2v2h-2v2h-2v2h-2v2h-4v-2h-2v-2h-2v-2h-2v-2h-2v-7h2z" fill="#f40808"/></svg>
<svg style="left:1246.3px;top:874.800px" width="19.400" height="19.400" viewBox="0 0 22 22"><path d="M2 7l5 1 3 5 8 4-1 2.500-9-2.500-5-4z" fill="#5a4630"/><text x="14.500" y="11" text-anchor="middle" font-family="Liberation Sans,sans-serif" font-weight="bold" font-size="11" fill="#c8d8d4">A</text><circle cx="6" cy="8" r="2.300" fill="none" stroke="#6e6e6e" stroke-width="1.600"/></svg>
<svg style="left:1285.3px;top:874.800px" width="19.400" height="19.400" viewBox="0 0 22 22"><text x="9.500" y="19.500" text-anchor="middle" font-family="Liberation Sans,sans-serif" font-weight="bold" font-size="19" fill="#f4a020" stroke="#c8780c" stroke-width=".5">w</text><text x="17.500" y="10" text-anchor="middle" font-family="Liberation Sans,sans-serif" font-weight="bold" font-size="11" fill="#f8c030">c</text><circle cx="5" cy="5" r="2.600" fill="#d8801a"/><path d="M3.500 2.500l2.500-1.500 1.500 2" fill="none" stroke="#58a828" stroke-width="1.500"/></svg>
<svg style="left:1323.8px;top:874.800px" width="19.400" height="19.400" viewBox="0 0 22 22"><rect x="2.500" y="2.500" width="17" height="17" fill="#f4f4f2"/><rect x="2.500" y="2.500" width="17" height="17" fill="none" stroke="#c9c9c9"/><path d="M6.500 10.500q-1-4.500 4-5.500 6-.5 6 3.500 0 3-4.500 3.500-3 0-2.500-2 .5-1.500 3-1.500M11.500 12q1 2 .5 5.500" fill="none" stroke="#262626" stroke-width="1.900" stroke-linecap="round"/></svg>
<div style="left:427px;top:898px;width:32px;height:2px;background:#76b9ed"></div>
<div style="left:465.5px;top:898px;width:32.0px;height:2px;background:#76b9ed"></div>
<div style="left:504.5px;top:898px;width:32.0px;height:2px;background:#76b9ed"></div>
<div style="left:737px;top:898px;width:32px;height:2px;background:#76b9ed"></div>
<div style="left:1315px;top:898px;width:38px;height:2px;background:#76b9ed"></div>
<svg style="left:1384px;top:872px" width="120" height="24" viewBox="0 0 120 24"><path d="M5 14l4.500-4.500 4.500 4.500" fill="none" stroke="#f2f2f2" stroke-width="1.200"/><rect x="24.500" y="5.500" width="5" height="9.500" rx="2.500" fill="#f2f2f2"/><path d="M23 12.500a4 4 0 0 0 8 0M27 16.500v2.500M24.500 19.500h5" fill="none" stroke="#c9c9c9" stroke-width="1"/><rect x="41.500" y="6.500" width="11" height="9" fill="none" stroke="#f2f2f2" stroke-width="1.100"/><path d="M44 18.500h6M47 15.500v3" stroke="#f2f2f2" stroke-width="1.100"/><rect x="39.500" y="5" width="4" height="5" fill="#1f2027" stroke="#f2f2f2" stroke-width=".9"/><path d="M58.500 10h2.500l3-3v10l-3-3h-2.500z" fill="none" stroke="#f2f2f2" stroke-width="1"/><path d="M66 9.500q1.500 2.500 0 5M68.500 8q2.500 4 0 8M71 6.500q3.500 5.500 0 11" fill="none" stroke="#f2f2f2" stroke-width=".9"/><path d="M83 17l8-11" stroke="#f2f2f2" stroke-width="1.100"/><circle cx="84.500" cy="15" r="2.800" fill="none" stroke="#f2f2f2" stroke-width="1.100"/><circle cx="89.500" cy="8.500" r="2.800" fill="none" stroke="#f2f2f2" stroke-width="1.100"/><path d="M80.500 18l1.500-2M91 6l2-2" stroke="#f2f2f2" stroke-width="1.100"/></svg>
<div class="t" style="left:1485px;top:874px;font-size:16px;line-height:18px;color:#f4f4f4;transform:scaleX(.9);transform-origin:0 0">A</div>
<div class="t" style="left:1500px;top:872px;width:60px;text-align:center;font-size:9.500px;font-weight:400;color:#f4f4f4">오후 9:19</div>
<div class="t" style="left:1499.700px;top:886px;width:60px;text-align:center;font-size:9px;font-weight:400;color:#f4f4f4">2020-07-01</div>
<svg style="left:1565px;top:874px" width="24" height="22" viewBox="0 0 24 22"><path d="M3.500 2.500h12v9h-8l-2.500 3v-3h-1.500z" fill="#f4f4f4"/><path d="M5.500 5h8M5.500 7h8M5.500 9h6" stroke="#1f2027" stroke-width=".8"/><circle cx="14" cy="13.500" r="4.700" fill="#1f2027" stroke="#c9c9c9" stroke-width=".9"/><text x="14" y="17" text-anchor="middle" font-family="Liberation Sans,sans-serif" font-size="9" fill="#f4f4f4">7</text></svg>
<div style="left:1596px;top:868px;width:1px;height:32px;background:#5a5b60"></div>
</div>
</body>
</html>
